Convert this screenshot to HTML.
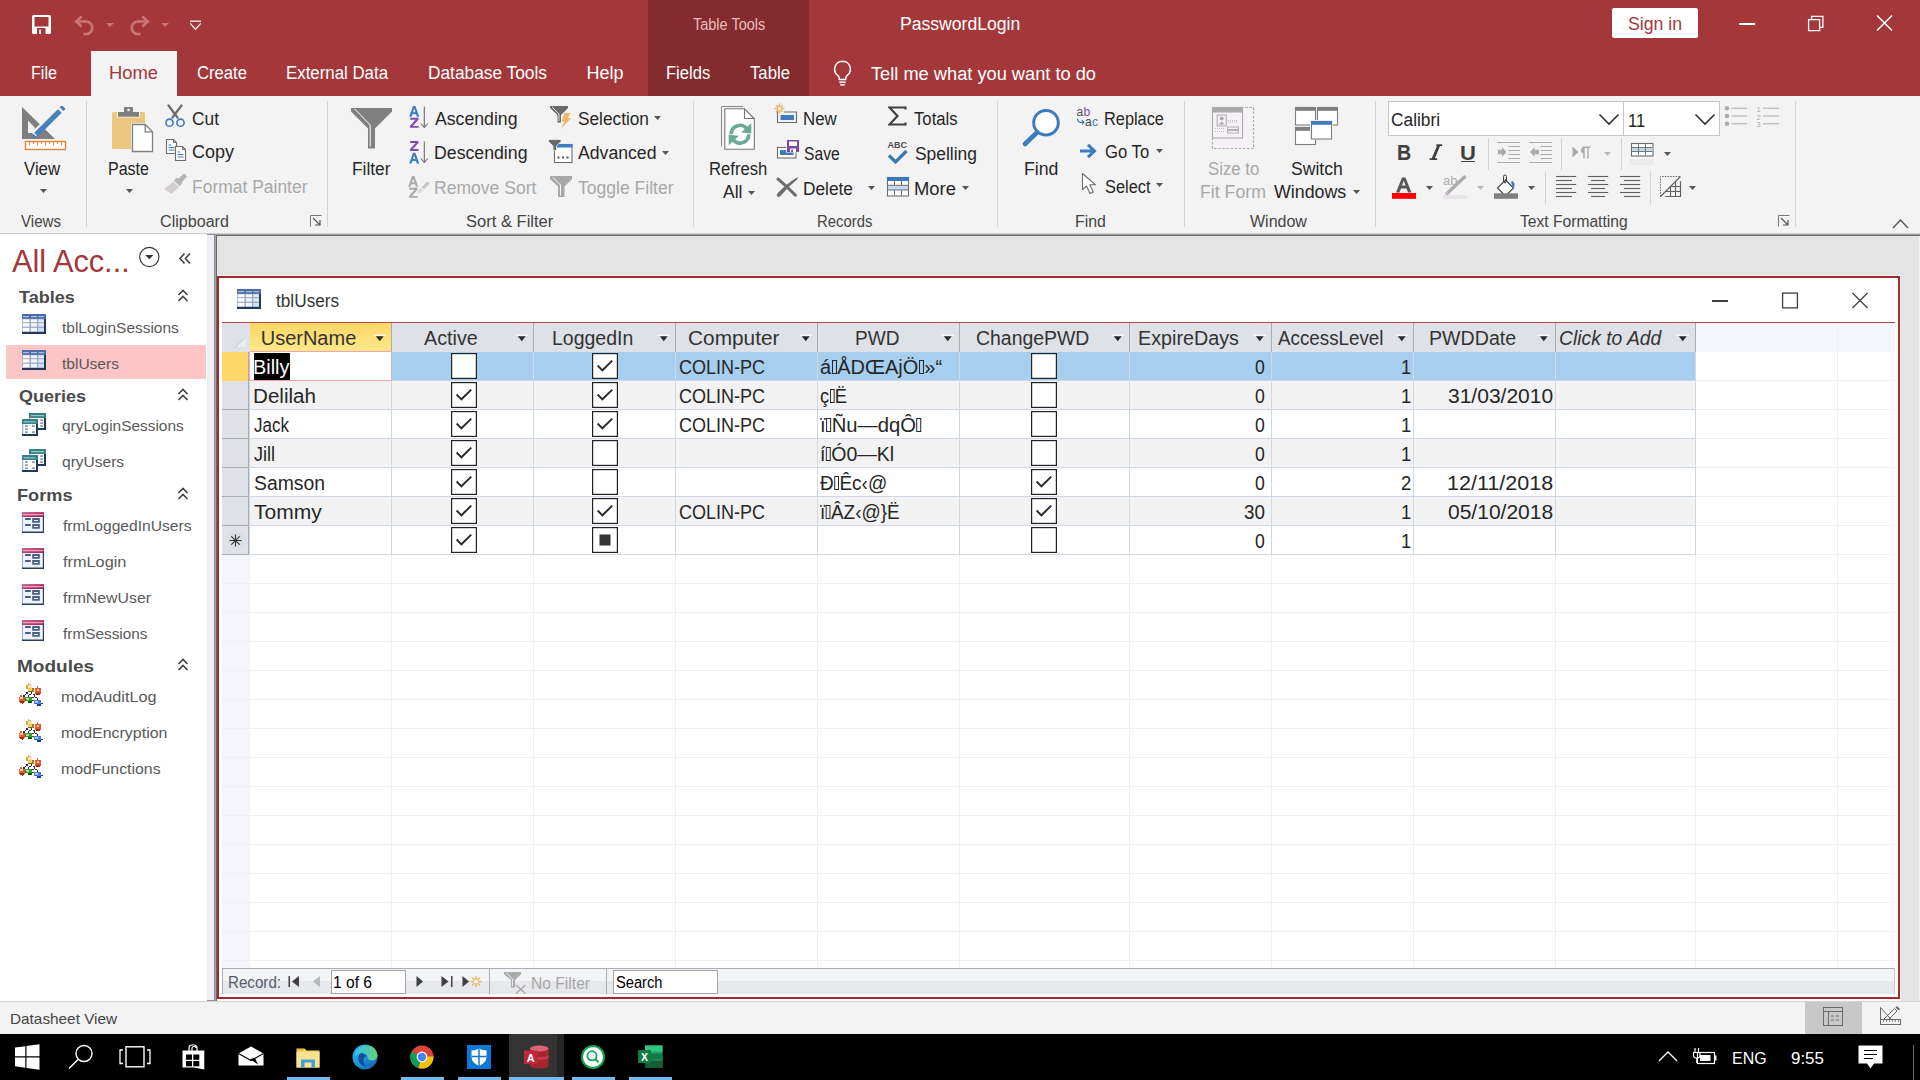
<!DOCTYPE html>
<html><head><meta charset="utf-8"><title>Access</title><style>
*{margin:0;padding:0;box-sizing:border-box}
html,body{width:1920px;height:1080px;overflow:hidden;background:#F3F3F3;font-family:"Liberation Sans",sans-serif;position:relative}
.a{position:absolute}
.t{position:absolute;white-space:nowrap;line-height:1;transform-origin:0 0}
.tofu{display:inline-block;width:5px;height:14.5px;border:1.2px solid currentColor;vertical-align:0;margin:0 0.5px}
</style></head><body>
<div class="a" style="left:0px;top:0px;width:1920px;height:96px;background:#A4373A;"></div>
<div class="a" style="left:648px;top:0px;width:161px;height:96px;background:#832B2E;"></div>
<div class="a" style="left:91px;top:51px;width:86px;height:45px;background:#F3F3F3;"></div>
<svg class="a" style="left:32px;top:15px" width="20" height="20" viewBox="0 0 20 20"><rect x="0" y="0" width="19" height="19" rx="1.5" fill="#fff"/><rect x="2.5" y="2" width="14" height="9.5" fill="#A4373A"/><rect x="5" y="13" width="8.5" height="6" fill="#A4373A"/><rect x="7.2" y="14.6" width="1.8" height="4.4" fill="#fff"/></svg>
<svg class="a" style="left:73px;top:15px" width="23" height="21" viewBox="0 0 23 21"><path d="M3.5 6.5H13a6.3 6.3 0 0 1 0 12.6h-2.5" fill="none" stroke="#C97678" stroke-width="2.6"/><path d="M8.6 1.4L3.3 6.5l5.3 5.1" fill="none" stroke="#C97678" stroke-width="2.6"/></svg>
<svg class="a" style="left:106px;top:23px" width="8" height="4" viewBox="0 0 8 4"><path d="M0 0H8L4 4Z" fill="#C97678"/></svg>
<svg class="a" style="left:128px;top:15px" width="23" height="21" viewBox="0 0 23 21"><path d="M19.5 6.5H10a6.3 6.3 0 0 0 0 12.6h2.5" fill="none" stroke="#C97678" stroke-width="2.6"/><path d="M14.4 1.4L19.7 6.5l-5.3 5.1" fill="none" stroke="#C97678" stroke-width="2.6"/></svg>
<svg class="a" style="left:161px;top:23px" width="8" height="4" viewBox="0 0 8 4"><path d="M0 0H8L4 4Z" fill="#C97678"/></svg>
<svg class="a" style="left:189px;top:20px" width="13" height="11" viewBox="0 0 13 11"><path d="M1 1.2H12" stroke="#fff" stroke-width="1.2"/><path d="M1.3 3.3L6.5 9.3L11.7 3.3" fill="none" stroke="#fff" stroke-width="1.2"/></svg>
<div class="t" style="left:692.50px;top:16.65px;font-size:16px;color:#EDBDBE;transform:scaleX(0.9057);">Table Tools</div>
<div class="t" style="left:899.77px;top:15.46px;font-size:18px;color:#FFFFFF;transform:scaleX(0.9768);">PasswordLogin</div>
<div class="a" style="left:1612px;top:8px;width:86px;height:30px;background:#FFFFFF;border-radius:2px"></div>
<div class="t" style="left:1628.00px;top:15.46px;font-size:18px;color:#A4373A;transform:scaleX(0.9810);">Sign in</div>
<div class="a" style="left:1739px;top:23px;width:16px;height:2px;background:#FFFFFF;"></div>
<svg class="a" style="left:1807px;top:14px" width="19" height="18" viewBox="0 0 19 18"><path d="M1.6 5.6H12.6V16.6H1.6Z" fill="none" stroke="#fff" stroke-width="1.3"/><path d="M4.6 5.6V2.3H15.9V13.4H12.6" fill="none" stroke="#fff" stroke-width="1.3"/></svg>
<svg class="a" style="left:1876px;top:15px" width="17" height="16" viewBox="0 0 17 16"><path d="M1 0.5L16 15.5M16 0.5L1 15.5" stroke="#fff" stroke-width="1.5"/></svg>
<div class="t" style="left:31.11px;top:64.21px;font-size:18px;color:#FFFFFF;transform:scaleX(0.8931);">File</div>
<div class="t" style="left:108.98px;top:64.21px;font-size:18px;color:#A4373A;transform:scaleX(1.0212);">Home</div>
<div class="t" style="left:197.00px;top:64.21px;font-size:18px;color:#FFFFFF;transform:scaleX(0.9257);">Create</div>
<div class="t" style="left:285.81px;top:64.21px;font-size:18px;color:#FFFFFF;transform:scaleX(0.9354);">External Data</div>
<div class="t" style="left:427.79px;top:64.21px;font-size:18px;color:#FFFFFF;transform:scaleX(0.9608);">Database Tools</div>
<div class="t" style="left:586.50px;top:64.21px;font-size:18px;color:#FFFFFF;">Help</div>
<div class="t" style="left:665.83px;top:64.21px;font-size:18px;color:#FFFFFF;transform:scaleX(0.9199);">Fields</div>
<div class="t" style="left:750.00px;top:64.21px;font-size:18px;color:#FFFFFF;transform:scaleX(0.9298);">Table</div>
<svg class="a" style="left:832px;top:60px" width="21" height="26" viewBox="0 0 21 26"><path d="M10.5 1.3a7.9 7.9 0 0 0-4.6 14.3c0.9 0.8 1.4 1.8 1.4 2.9v0.9h6.4v-0.9c0-1.1 0.5-2.1 1.4-2.9a7.9 7.9 0 0 0-4.6-14.3z" fill="none" stroke="#fff" stroke-width="1.5"/><path d="M7.3 22.2H13.7M8.2 24.8H12.8" stroke="#fff" stroke-width="1.5"/></svg>
<div class="t" style="left:871.00px;top:64.96px;font-size:18px;color:#FFFFFF;transform:scaleX(1.0130);">Tell me what you want to do</div>
<div class="a" style="left:0px;top:96px;width:1920px;height:138px;background:#F3F3F3;"></div>
<div class="a" style="left:0px;top:233px;width:1920px;height:1px;background:#CFCFCF;"></div>
<div class="a" style="left:86px;top:101px;width:1px;height:126px;background:#D2D2D2;"></div>
<div class="a" style="left:327px;top:101px;width:1px;height:126px;background:#D2D2D2;"></div>
<div class="a" style="left:693px;top:101px;width:1px;height:126px;background:#D2D2D2;"></div>
<div class="a" style="left:997px;top:101px;width:1px;height:126px;background:#D2D2D2;"></div>
<div class="a" style="left:1184px;top:101px;width:1px;height:126px;background:#D2D2D2;"></div>
<div class="a" style="left:1375px;top:101px;width:1px;height:126px;background:#D2D2D2;"></div>
<div class="a" style="left:1795px;top:101px;width:1px;height:126px;background:#D2D2D2;"></div>
<div class="t" style="left:21.00px;top:214.05px;font-size:16px;color:#444444;transform:scaleX(0.9436);">Views</div>
<div class="t" style="left:160.00px;top:214.05px;font-size:16px;color:#444444;transform:scaleX(1.0061);">Clipboard</div>
<div class="t" style="left:466.17px;top:214.05px;font-size:16px;color:#444444;transform:scaleX(1.0336);">Sort &amp; Filter</div>
<div class="t" style="left:816.87px;top:214.05px;font-size:16px;color:#444444;transform:scaleX(0.9287);">Records</div>
<div class="t" style="left:1074.51px;top:214.05px;font-size:16px;color:#444444;transform:scaleX(0.9922);">Find</div>
<div class="t" style="left:1250.00px;top:214.05px;font-size:16px;color:#444444;">Window</div>
<div class="t" style="left:1519.50px;top:214.05px;font-size:16px;color:#444444;transform:scaleX(0.9761);">Text Formatting</div>
<svg class="a" style="left:310px;top:215px" width="12" height="12" viewBox="0 0 12 12"><path d="M0.5 11.5V0.5H11.5" fill="none" stroke="#777" stroke-width="1"/><path d="M3 3L10 10M10 5V10H5" fill="none" stroke="#555" stroke-width="1.2"/></svg>
<svg class="a" style="left:1778px;top:215px" width="12" height="12" viewBox="0 0 12 12"><path d="M0.5 11.5V0.5H11.5" fill="none" stroke="#777" stroke-width="1"/><path d="M3 3L10 10M10 5V10H5" fill="none" stroke="#555" stroke-width="1.2"/></svg>
<svg class="a" style="left:1892px;top:218px" width="17" height="11" viewBox="0 0 17 11"><path d="M1 10L8.5 2L16 10" fill="none" stroke="#555" stroke-width="1.4"/></svg>
<svg class="a" style="left:21px;top:106px" width="46" height="45" viewBox="0 0 46 45">
      <path d="M1 1L34 33H1Z" fill="#7F7F7F"/>
      <path d="M7 14.5V27H19Z" fill="#F3F3F3"/>
      <path d="M10.5 26.5L14.5 30.5L28.5 16.5L24.5 12.5Z" fill="#F3F3F3"/>
      <path d="M13.2 26.8L37.3 2.7L41 6.4L16.9 30.5Z" fill="#4A81BD"/>
      <path d="M12.2 27.8L15.9 31.5L11.5 33Z" fill="#4A81BD"/>
      <path d="M38.6 1.3L40.8 -0.9L44.6 2.9L42.4 5.1Z" fill="#4A81BD"/>
      <path d="M36.9 3.0L38.4 1.5L42.3 5.4L40.8 6.9Z" fill="#F3F3F3"/>
      <rect x="4.5" y="35.5" width="40" height="8" fill="#fff" stroke="#E4853A" stroke-width="1.4"/>
      <path d="M8.5 36v3.5M12.5 36v2M16.5 36v3.5M20.5 36v2M24.5 36v3.5M28.5 36v2M32.5 36v3.5M36.5 36v2M40.5 36v3.5" stroke="#E4853A" stroke-width="1.1"/>
    </svg>
<div class="t" style="left:24.00px;top:159.71px;font-size:18px;color:#262626;transform:scaleX(0.9322);">View</div>
<svg class="a" style="left:40px;top:189px" width="7" height="4" viewBox="0 0 7 4"><path d="M0 0H7L3.5 4Z" fill="#555"/></svg>
<svg class="a" style="left:111px;top:106px" width="43" height="47" viewBox="0 0 43 47">
      <rect x="1" y="6" width="33" height="37" rx="1.5" fill="#EBC77E"/>
      <rect x="6" y="4.5" width="23" height="7" fill="#F3F3F3"/>
      <path d="M13 1.5Q13 1 13.8 1H21.2Q22 1 22 1.5V6H28V10.8H7V6H13Z" fill="#7F7F7F"/>
      <circle cx="17.5" cy="4" r="1.3" fill="#F3F3F3"/>
      <path d="M20 17H34.5L43 25.5V47H20Z" fill="#F3F3F3"/>
      <path d="M21.5 18.5H34.2L41.5 25.8V45.5H21.5Z" fill="#fff" stroke="#7F7F7F" stroke-width="1.3"/>
      <path d="M34.2 18.5V25.8H41.5" fill="none" stroke="#7F7F7F" stroke-width="1.3"/>
    </svg>
<div class="t" style="left:108.11px;top:159.71px;font-size:18px;color:#262626;transform:scaleX(0.8885);">Paste</div>
<svg class="a" style="left:126px;top:189px" width="7" height="4" viewBox="0 0 7 4"><path d="M0 0H7L3.5 4Z" fill="#555"/></svg>
<svg class="a" style="left:164px;top:104px" width="23" height="25" viewBox="0 0 23 25">
      <path d="M4.5 1.5L13.5 13.5M17.5 1.5L8.5 13.5" stroke="#6D6D6D" stroke-width="2.2" stroke-linecap="round"/>
      <circle cx="5.5" cy="18.7" r="3.6" fill="none" stroke="#3E7CBF" stroke-width="1.6"/>
      <circle cx="16.5" cy="18.7" r="3.6" fill="none" stroke="#3E7CBF" stroke-width="1.6"/>
    </svg>
<div class="t" style="left:192.00px;top:109.71px;font-size:18px;color:#262626;transform:scaleX(0.9639);">Cut</div>
<svg class="a" style="left:165px;top:138px" width="23" height="24" viewBox="0 0 23 24">
      <path d="M1.5 1.5H8.5L11.5 4.5V15.5H1.5Z" fill="#fff" stroke="#6D6D6D" stroke-width="1.1"/>
      <path d="M8.5 1.5V4.5H11.5" fill="none" stroke="#6D6D6D" stroke-width="1"/>
      <path d="M3.5 7H6M3.5 9.5H9.5M3.5 12H9.5" stroke="#3E7CBF" stroke-width="1"/>
      <path d="M10.5 8.5H17.5L20.5 11.5V22.5H10.5Z" fill="#fff" stroke="#6D6D6D" stroke-width="1.1"/>
      <path d="M17.5 8.5V11.5H20.5" fill="none" stroke="#6D6D6D" stroke-width="1"/>
      <path d="M12.5 14H15M12.5 16.5H18.5M12.5 19H18.5" stroke="#3E7CBF" stroke-width="1"/>
    </svg>
<div class="t" style="left:192.00px;top:143.46px;font-size:18px;color:#262626;">Copy</div>
<svg class="a" style="left:163px;top:173px" width="25" height="22" viewBox="0 0 25 22">
      <path d="M14.5 6.5L21 0.5L24 3.5L18 10Z" fill="#B5B2B5"/>
      <path d="M11 7.5L14 4.5L19.5 10L16.5 13Z" fill="#B5B2B5"/>
      <path d="M1 16L10.5 8.5L16 14L8.5 21Z" fill="#D2CED2"/>
    </svg>
<div class="t" style="left:191.53px;top:177.96px;font-size:18px;color:#A8A8A8;transform:scaleX(0.9700);">Format Painter</div>
<svg class="a" style="left:350px;top:107px" width="43" height="43" viewBox="0 0 43 43">
      <path d="M1 1H42V4.5L25 21.5V41.5H18V21.5L1 4.5Z" fill="#808080"/>
      <path d="M4.5 1.8L20.2 18V39.5" fill="none" stroke="#fff" stroke-width="1"/>
    </svg>
<div class="t" style="left:351.54px;top:159.71px;font-size:18px;color:#262626;transform:scaleX(0.9614);">Filter</div>
<svg class="a" style="left:409px;top:106px" width="11" height="23" viewBox="0 0 11 23"><path transform="translate(0 0)" d="M0.2 10.7L4 0H6.4L10.2 10.7H7.8L7 8.2H3.4L2.6 10.7ZM4 6.3H6.4L5.2 2.6Z" fill="#3C7BC0"/><path transform="translate(0 11.8)" d="M1.2 0H9.4V1.9L3.9 8.1H9.5V10H0.9V8.2L6.5 1.9H1.2Z" fill="#7F4BB0"/></svg>
<svg class="a" style="left:420px;top:106px" width="9" height="23" viewBox="0 0 9 23"><path d="M4.3 0.5V21.5M0.8 17.5L4.3 21.5L7.8 17.5" fill="none" stroke="#6D6D6D" stroke-width="1.1"/></svg>
<div class="t" style="left:434.50px;top:110.46px;font-size:18px;color:#262626;transform:scaleX(0.9814);">Ascending</div>
<svg class="a" style="left:409px;top:141px" width="11" height="23" viewBox="0 0 11 23"><path transform="translate(0 0)" d="M1.2 0H9.4V1.9L3.9 8.1H9.5V10H0.9V8.2L6.5 1.9H1.2Z" fill="#7F4BB0"/><path transform="translate(0 11.8)" d="M0.2 10.7L4 0H6.4L10.2 10.7H7.8L7 8.2H3.4L2.6 10.7ZM4 6.3H6.4L5.2 2.6Z" fill="#3C7BC0"/></svg>
<svg class="a" style="left:420px;top:141px" width="9" height="23" viewBox="0 0 9 23"><path d="M4.3 0.5V21.5M0.8 17.5L4.3 21.5L7.8 17.5" fill="none" stroke="#6D6D6D" stroke-width="1.1"/></svg>
<div class="t" style="left:433.52px;top:144.46px;font-size:18px;color:#262626;transform:scaleX(0.9833);">Descending</div>
<svg class="a" style="left:408px;top:176px" width="11" height="23" viewBox="0 0 11 23"><path transform="translate(0 0)" d="M0.2 10.7L4 0H6.4L10.2 10.7H7.8L7 8.2H3.4L2.6 10.7ZM4 6.3H6.4L5.2 2.6Z" fill="#ABABAB"/><path transform="translate(0 11.8)" d="M1.2 0H9.4V1.9L3.9 8.1H9.5V10H0.9V8.2L6.5 1.9H1.2Z" fill="#ABABAB"/></svg>
<svg class="a" style="left:415px;top:180px" width="15" height="15" viewBox="0 0 15 15"><path d="M6.5 7.2L11.8 1.9Q12.6 1.1 13.4 1.9L14.1 2.6Q14.9 3.4 14.1 4.2L8.8 9.5Z" fill="#C9C5C9"/><path d="M5.6 8.1L7.9 10.4L4.8 13.2Q3.9 13.9 3.2 13.2L2.6 12.6Q1.9 11.9 2.6 11.1Z" fill="#DCD8DC"/></svg>
<div class="t" style="left:433.52px;top:179.46px;font-size:18px;color:#A8A8A8;transform:scaleX(0.9756);">Remove Sort</div>
<svg class="a" style="left:549px;top:105px" width="22" height="25" viewBox="0 0 22 25">
      <path d="M1 1H19V3L12 10V17.5H8.5V10L1 3Z" fill="#6A6A6A"/>
      <path d="M3 2L10 9V16" fill="none" stroke="#fff" stroke-width="0.8"/>
      <path d="M15.5 8H21.5L18.6 13.2H22L11.8 24L15.6 16.4H12.5Z" fill="#EAB765"/>
    </svg>
<div class="t" style="left:577.50px;top:110.46px;font-size:18px;color:#262626;transform:scaleX(0.9584);">Selection</div>
<svg class="a" style="left:654px;top:116px" width="7" height="4" viewBox="0 0 7 4"><path d="M0 0H7L3.5 4Z" fill="#555"/></svg>
<svg class="a" style="left:548px;top:139px" width="25" height="25" viewBox="0 0 25 25">
      <rect x="6.5" y="5.5" width="17.5" height="18" fill="#fff" stroke="#6D6D6D" stroke-width="1.1"/>
      <rect x="6" y="5" width="18.5" height="3.5" fill="#3E7CBF"/>
      <path d="M0.5 0.5H13V2.5L8.5 7V11.5H5V7L0.5 2.5Z" fill="#6A6A6A" stroke="#F3F3F3" stroke-width="0.8"/>
      <rect x="9.5" y="17.5" width="2" height="2" fill="#555"/><rect x="14" y="17.5" width="2" height="2" fill="#555"/><rect x="18.5" y="17.5" width="2" height="2" fill="#555"/>
    </svg>
<div class="t" style="left:577.50px;top:144.46px;font-size:18px;color:#262626;transform:scaleX(0.9804);">Advanced</div>
<svg class="a" style="left:662px;top:151px" width="7" height="4" viewBox="0 0 7 4"><path d="M0 0H7L3.5 4Z" fill="#555"/></svg>
<svg class="a" style="left:549px;top:175px" width="24" height="23" viewBox="0 0 24 23">
      <path d="M1 1H23V4L15.5 11.5V22H9V11.5L1 4Z" fill="#A8A8A8"/>
      <path d="M4 2.5L11.5 10V20.5" fill="none" stroke="#fff" stroke-width="0.9"/>
    </svg>
<div class="t" style="left:577.50px;top:179.46px;font-size:18px;color:#A8A8A8;transform:scaleX(0.9740);">Toggle Filter</div>
<svg class="a" style="left:720px;top:105px" width="36" height="46" viewBox="0 0 36 46">
      <path d="M1.5 41.5V1.5H23" fill="none" stroke="#888" stroke-width="1"/>
      <path d="M4.8 44.3V3.8H24.5L34.3 13.5V44.3Z" fill="#fff" stroke="#777" stroke-width="1.1"/>
      <path d="M24.5 3.8V13.5H34.3" fill="none" stroke="#777" stroke-width="1.1"/>
      <path d="M11.20 29.20A8.8 8.8 0 0 1 26.54 23.31" fill="none" stroke="#6AA897" stroke-width="3.6"/><path d="M21 27.6L31.3 18.2V28.6Z" fill="#6AA897"/><path d="M28.80 29.20A8.8 8.8 0 0 1 13.46 35.09" fill="none" stroke="#6AA897" stroke-width="3.6"/><path d="M19 30.8L8.7 40.2V29.8Z" fill="#6AA897"/>
    </svg>
<div class="t" style="left:708.57px;top:159.71px;font-size:18px;color:#262626;transform:scaleX(0.9260);">Refresh</div>
<div class="t" style="left:722.50px;top:182.96px;font-size:18px;color:#262626;transform:scaleX(0.9734);">All</div>
<svg class="a" style="left:748px;top:191px" width="7" height="4" viewBox="0 0 7 4"><path d="M0 0H7L3.5 4Z" fill="#555"/></svg>
<svg class="a" style="left:774px;top:103px" width="25" height="21" viewBox="0 0 25 21">
      <path d="M5.5 0.5V10.5M0.5 5.5H10.5M2 2L9 9M9 2L2 9" stroke="#EAB765" stroke-width="1.3"/>
      <circle cx="5.5" cy="5.5" r="2.9" fill="#EAB765"/><circle cx="5.5" cy="5.5" r="1.7" fill="#FFF6E0"/>
      <path d="M3.5 8.5V19.5H22.5V9H10" fill="none" stroke="#6D6D6D" stroke-width="1.1"/>
      <rect x="6.5" y="12" width="13.5" height="5" fill="#3E7CBF"/>
    </svg>
<div class="t" style="left:802.81px;top:110.46px;font-size:18px;color:#262626;transform:scaleX(0.9372);">New</div>
<svg class="a" style="left:776px;top:139px" width="25" height="21" viewBox="0 0 25 21">
      <rect x="1.5" y="8.5" width="18.5" height="10.5" fill="#fff" stroke="#6D6D6D" stroke-width="1.1"/>
      <rect x="4" y="11" width="13.5" height="5" fill="#3E7CBF"/>
      <rect x="10" y="0" width="14" height="13.5" fill="#F3F3F3"/>
      <rect x="11" y="1" width="12" height="12" fill="#7E45A8"/>
      <rect x="13" y="2.5" width="8" height="4.5" fill="#fff"/>
      <rect x="14" y="9.5" width="6" height="3.5" fill="#fff"/><rect x="15.2" y="10.5" width="1.8" height="2.5" fill="#7E45A8"/>
    </svg>
<div class="t" style="left:804.00px;top:145.06px;font-size:18px;color:#262626;transform:scaleX(0.8704);">Save</div>
<svg class="a" style="left:775px;top:176px" width="24" height="22" viewBox="0 0 24 22">
      <path d="M1.6 2.6Q2.6 0.9 4.2 1.9Q12 8.5 21.6 18.2Q22.6 19.6 21.4 20.6Q20.2 21.2 19 20Q10 10.5 2.2 4.4Q1.2 3.6 1.6 2.6Z" fill="#6D6D6D"/>
      <path d="M22.6 2.2Q23.2 1.2 22 1.4Q12 7.2 2.4 17.4Q1 19.2 2.4 20.6Q4 21.6 5.4 20Q13.5 10.5 22 3.4Q22.6 2.8 22.6 2.2Z" fill="#6D6D6D"/>
    </svg>
<div class="t" style="left:803.04px;top:179.96px;font-size:18px;color:#262626;transform:scaleX(0.9604);">Delete</div>
<svg class="a" style="left:868px;top:186px" width="7" height="4" viewBox="0 0 7 4"><path d="M0 0H7L3.5 4Z" fill="#555"/></svg>
<svg class="a" style="left:888px;top:106px" width="19" height="20" viewBox="0 0 19 20"><path d="M17.5 3.5V1.5H1.5L9.5 10L1.5 18.5H17.5V16.5" fill="none" stroke="#404040" stroke-width="2.2"/></svg>
<div class="t" style="left:914.30px;top:110.46px;font-size:18px;color:#262626;transform:scaleX(0.9272);">Totals</div>
<svg class="a" style="left:886px;top:140px" width="22" height="25" viewBox="0 0 22 25">
      <text x="1.4" y="8.2" font-family="Liberation Sans" font-weight="bold" font-size="9.6" fill="#505050" textLength="19.5" lengthAdjust="spacingAndGlyphs">ABC</text>
      <path d="M3 15.5L9.5 22L20.5 11" fill="none" stroke="#3C78B8" stroke-width="3.2"/>
    </svg>
<div class="t" style="left:914.90px;top:145.06px;font-size:18px;color:#262626;transform:scaleX(0.9677);">Spelling</div>
<svg class="a" style="left:886px;top:176px" width="24" height="21" viewBox="0 0 24 21">
      <rect x="1.5" y="1.5" width="21" height="18.5" fill="#fff" stroke="#6D6D6D" stroke-width="1.1"/>
      <rect x="1" y="1" width="22" height="4" fill="#3C78B8"/>
      <rect x="2" y="9.3" width="20" height="4.6" fill="#C5D9EC"/>
      <path d="M2 9.3H22M2 14H22M8.5 5V9.3M15.5 5V9.3M8.5 14V19.5M15.5 14V19.5" stroke="#6D6D6D" stroke-width="1"/>
    </svg>
<div class="t" style="left:914.28px;top:179.96px;font-size:18px;color:#262626;transform:scaleX(1.0225);">More</div>
<svg class="a" style="left:962px;top:186px" width="7" height="4" viewBox="0 0 7 4"><path d="M0 0H7L3.5 4Z" fill="#555"/></svg>
<svg class="a" style="left:1020px;top:107px" width="42" height="42" viewBox="0 0 42 42">
      <circle cx="26" cy="15.7" r="12.3" fill="#fff" stroke="#3C7BC0" stroke-width="3"/>
      <path d="M5 37L16.5 26" stroke="#3C7BC0" stroke-width="4.6" stroke-linecap="round"/>
    </svg>
<div class="t" style="left:1023.52px;top:159.71px;font-size:18px;color:#262626;transform:scaleX(0.9847);">Find</div>
<svg class="a" style="left:1075px;top:104px" width="26" height="24" viewBox="0 0 26 24">
      <text x="1.5" y="11.5" font-family="Liberation Sans" font-size="12" fill="#505050">a</text>
      <text x="8.5" y="11.5" font-family="Liberation Sans" font-size="12" fill="#7F4BB0">b</text>
      <text x="10" y="21.7" font-family="Liberation Sans" font-size="12" fill="#404040">a</text>
      <text x="17" y="21.7" font-family="Liberation Sans" font-size="12" fill="#3C7BC0">c</text>
      <path d="M2.5 14.5Q2.5 18 5.5 18.3H9M6.8 16.2L9 18.3L6.8 20.4" fill="none" stroke="#3C7BC0" stroke-width="1.2"/>
    </svg>
<div class="t" style="left:1104.09px;top:110.46px;font-size:18px;color:#262626;transform:scaleX(0.9073);">Replace</div>
<svg class="a" style="left:1079px;top:143px" width="19" height="16" viewBox="0 0 19 16"><path d="M1 8H15M9 1.8L15.5 8L9 14.2" fill="none" stroke="#3C7BC0" stroke-width="3"/></svg>
<div class="t" style="left:1104.50px;top:143.46px;font-size:18px;color:#262626;transform:scaleX(0.9268);">Go To</div>
<svg class="a" style="left:1156px;top:149px" width="7" height="4" viewBox="0 0 7 4"><path d="M0 0H7L3.5 4Z" fill="#555"/></svg>
<svg class="a" style="left:1081px;top:172px" width="17" height="24" viewBox="0 0 17 24"><path d="M1.5 1.5V17.5L5.5 14L9 21.5L12.2 20L8.8 12.8H14.5Z" fill="#fff" stroke="#6D6D6D" stroke-width="1.1" stroke-linejoin="round"/></svg>
<div class="t" style="left:1104.50px;top:178.46px;font-size:18px;color:#262626;transform:scaleX(0.9095);">Select</div>
<svg class="a" style="left:1156px;top:183px" width="7" height="4" viewBox="0 0 7 4"><path d="M0 0H7L3.5 4Z" fill="#555"/></svg>
<svg class="a" style="left:1211px;top:106px" width="44" height="44" viewBox="0 0 44 44">
      <rect x="1.5" y="1.5" width="41" height="41" fill="#F5F1F7" stroke="#A8A8A8" stroke-width="1.1" stroke-dasharray="2.5 1.6"/>
      <rect x="1.5" y="1.5" width="30" height="30.5" fill="#F5F1F7" stroke="#AAAAAA" stroke-width="1.1"/>
      <rect x="1" y="1" width="31" height="5.5" fill="#AAAAAA"/>
      <rect x="6.2" y="9" width="9" height="11" fill="none" stroke="#AAAAAA" stroke-width="1"/>
      <circle cx="10.7" cy="12.5" r="1.9" fill="#AAAAAA"/><path d="M7.7 18.5Q10.7 13.5 13.7 18.5Z" fill="#AAAAAA"/>
      <path d="M17 14.5h10M17 16h10" stroke="#BBBBBB" stroke-width="0.9" stroke-dasharray="1 1"/>
      <path d="M4 22.5h10M4 25.5h10" stroke="#BBBBBB" stroke-width="0.9" stroke-dasharray="1 1"/>
      <rect x="16.5" y="21" width="11" height="2.5" fill="none" stroke="#AAAAAA" stroke-width="0.9"/>
      <rect x="16.5" y="24.5" width="11" height="2.5" fill="none" stroke="#AAAAAA" stroke-width="0.9"/>
    </svg>
<div class="t" style="left:1207.50px;top:159.71px;font-size:18px;color:#A8A8A8;transform:scaleX(0.9315);">Size to</div>
<div class="t" style="left:1199.52px;top:182.96px;font-size:18px;color:#A8A8A8;transform:scaleX(0.9847);">Fit Form</div>
<svg class="a" style="left:1294px;top:106px" width="46" height="40" viewBox="0 0 46 40">
      <rect x="1.5" y="1.5" width="20" height="17.5" fill="#fff" stroke="#7F7F7F" stroke-width="1.1"/><rect x="1" y="1" width="21" height="3.8" fill="#7F7F7F"/>
      <rect x="23.5" y="1.5" width="20" height="17.5" fill="#fff" stroke="#7F7F7F" stroke-width="1.1"/><rect x="23" y="1" width="21" height="3.8" fill="#7F7F7F"/>
      <rect x="1.5" y="21.5" width="20" height="17" fill="#fff" stroke="#7F7F7F" stroke-width="1.1"/><rect x="1" y="21" width="21" height="3.8" fill="#7F7F7F"/>
      <rect x="16" y="14" width="23" height="20" fill="#F3F3F3"/>
      <rect x="17.5" y="15.5" width="20" height="17.5" fill="#fff" stroke="#7F7F7F" stroke-width="1.1"/><rect x="17" y="15" width="21" height="3.8" fill="#3F7BBF"/>
    </svg>
<div class="t" style="left:1291.00px;top:159.71px;font-size:18px;color:#262626;transform:scaleX(0.9759);">Switch</div>
<div class="t" style="left:1273.75px;top:182.96px;font-size:18px;color:#262626;transform:scaleX(0.9895);">Windows</div>
<svg class="a" style="left:1353px;top:190px" width="7" height="4" viewBox="0 0 7 4"><path d="M0 0H7L3.5 4Z" fill="#555"/></svg>
<div class="a" style="left:1388px;top:101px;width:236px;height:35px;background:#FFFFFF;border:1px solid #C6C6C6"></div>
<div class="a" style="left:1623px;top:101px;width:97px;height:35px;background:#FFFFFF;border:1px solid #C6C6C6"></div>
<div class="t" style="left:1391.40px;top:111.46px;font-size:18px;color:#262626;transform:scaleX(0.9618);">Calibri</div>
<div class="t" style="left:1627.83px;top:111.71px;font-size:18px;color:#262626;transform:scaleX(0.9194);">11</div>
<svg class="a" style="left:1598px;top:113px" width="22" height="13" viewBox="0 0 22 13"><path d="M1.5 1.5L11 11L20.5 1.5" fill="none" stroke="#333" stroke-width="1.6"/></svg>
<svg class="a" style="left:1694px;top:113px" width="22" height="13" viewBox="0 0 22 13"><path d="M1.5 1.5L11 11L20.5 1.5" fill="none" stroke="#333" stroke-width="1.6"/></svg>
<svg class="a" style="left:1724px;top:105px" width="25" height="22" viewBox="0 0 25 22">
      <circle cx="3" cy="3.2" r="2.2" fill="#ABABAB"/><circle cx="3" cy="11" r="2.2" fill="#ABABAB"/><circle cx="3" cy="18.8" r="2.2" fill="#ABABAB"/>
      <path d="M7.5 3.2H23M7.5 11H23M7.5 18.8H23" stroke="#ABABAB" stroke-width="1"/>
    </svg>
<svg class="a" style="left:1756px;top:105px" width="24" height="22" viewBox="0 0 24 22">
      <text x="0.5" y="7" font-family="Liberation Sans" font-size="7.5" fill="#ABABAB">1</text>
      <text x="0.5" y="14.8" font-family="Liberation Sans" font-size="7.5" fill="#ABABAB">2</text>
      <text x="0.5" y="22.3" font-family="Liberation Sans" font-size="7.5" fill="#ABABAB">3</text>
      <path d="M7 3.2H23M7 11H23M7 18.8H23" stroke="#ABABAB" stroke-width="1"/>
    </svg>
<div class="t" style="left:1397.01px;top:142.07px;font-size:22px;color:#404040;font-weight:700;transform:scaleX(0.8929);">B</div>
<svg class="a" style="left:1428px;top:143px" width="15" height="18" viewBox="0 0 15 18"><path d="M8.6 1.2H14.2V2.9H12L6.9 15.3H9.2V17H1.6V15.3H3.8L8.9 2.9H8.2Z" fill="#404040"/></svg>
<div class="t" style="left:1459.65px;top:142.42px;font-size:21px;color:#404040;font-weight:700;transform:scaleX(1.0462);">U</div>
<div class="a" style="left:1460.5px;top:161px;width:14px;height:1.4px;background:#404040;"></div>
<div class="a" style="left:1488px;top:138px;width:1px;height:32px;background:#D2D2D2;"></div>
<div class="a" style="left:1561px;top:138px;width:1px;height:32px;background:#D2D2D2;"></div>
<div class="a" style="left:1621px;top:138px;width:1px;height:32px;background:#D2D2D2;"></div>
<svg class="a" style="left:1497px;top:141px" width="24" height="23" viewBox="0 0 24 23">
      <path d="M0.5 1.5H23M11.5 5.5H23M11.5 9.5H23M11.5 13.5H23M11.5 17.5H23M0.5 21.5H23" stroke="#ABABAB" stroke-width="1"/>
      <path d="M1 8.7H5V6.3L9.5 11L5 15.7V13.3H1Z" fill="#ABABAB"/>
    </svg>
<svg class="a" style="left:1529px;top:141px" width="24" height="23" viewBox="0 0 24 23">
      <path d="M0.5 1.5H23M11.5 5.5H23M11.5 9.5H23M11.5 13.5H23M11.5 17.5H23M0.5 21.5H23" stroke="#ABABAB" stroke-width="1"/>
      <path d="M10 8.7H5.5V6.3L1 11L5.5 15.7V13.3H10Z" fill="#ABABAB"/>
    </svg>
<svg class="a" style="left:1572px;top:146px" width="20" height="14" viewBox="0 0 20 14">
      <path d="M0.5 0.5L6.5 6L0.5 11.5Z" fill="#ABABAB"/>
      <path d="M12 12.5V1.2M16 12.5V1.2M10.5 1.2H18.5" stroke="#ABABAB" stroke-width="1.4"/>
      <path d="M12 1.2A3 3 0 0 0 12 7.5Z" fill="#ABABAB"/>
    </svg>
<svg class="a" style="left:1604px;top:152px" width="7" height="4" viewBox="0 0 7 4"><path d="M0 0H7L3.5 4Z" fill="#BBBBBB"/></svg>
<svg class="a" style="left:1630px;top:142px" width="25" height="24" viewBox="0 0 25 24">
      <rect x="1.5" y="1.5" width="21.5" height="12.5" fill="#fff" stroke="#6D6D6D" stroke-width="1.1"/>
      <rect x="2" y="5.5" width="20.5" height="4" fill="#C5D9EC"/>
      <path d="M2 5.5H22.5M2 9.5H22.5M8.5 2V13.5M15.5 2V13.5" stroke="#6D6D6D" stroke-width="0.9"/>
      <rect x="0" y="17" width="24" height="6" fill="#EBEBEB"/>
    </svg>
<svg class="a" style="left:1664px;top:152px" width="7" height="4" viewBox="0 0 7 4"><path d="M0 0H7L3.5 4Z" fill="#555"/></svg>
<svg class="a" style="left:1391px;top:176px" width="26" height="24" viewBox="0 0 26 24">
      <path d="M5 16.5L11 1.5H14.5L20.5 16.5H17L15.5 12.5H10L8.5 16.5ZM11 9.5H14.5L12.75 4.8Z" fill="#595959"/>
      <rect x="1" y="17" width="24" height="5.8" fill="#FF0000"/>
    </svg>
<svg class="a" style="left:1426px;top:186px" width="7" height="4" viewBox="0 0 7 4"><path d="M0 0H7L3.5 4Z" fill="#555"/></svg>
<svg class="a" style="left:1442px;top:174px" width="26" height="26" viewBox="0 0 26 26">
      <text x="1" y="11" font-family="Liberation Sans" font-size="13" fill="#AEAEAE">ab</text>
      <path d="M5 19.5L22.5 3" stroke="#ABABAB" stroke-width="3.4" stroke-linecap="round"/>
      <path d="M4.2 20L6.6 17.8" stroke="#F3F3F3" stroke-width="0.8"/>
      <rect x="1" y="21" width="24" height="4" fill="#E8E4EA"/>
    </svg>
<svg class="a" style="left:1477px;top:186px" width="7" height="4" viewBox="0 0 7 4"><path d="M0 0H7L3.5 4Z" fill="#BBBBBB"/></svg>
<svg class="a" style="left:1493px;top:174px" width="26" height="26" viewBox="0 0 26 26">
      <path d="M12.5 6L20.5 14L12.5 22L4.5 14Z" fill="#fff" stroke="#404040" stroke-width="1.1"/>
      <path d="M10.5 8V2.5Q10.5 1 12 1Q13.5 1 13.5 2.5V8" fill="none" stroke="#404040" stroke-width="1"/>
      <circle cx="12" cy="8.3" r="1.1" fill="#404040"/>
      <path d="M19 7Q22 8.5 21.5 11.5Q21 14 20 15.5Q19.5 11 18 8.5Z" fill="#3C7BC0"/>
      <rect x="1" y="19.3" width="24" height="5.5" fill="#808080"/>
    </svg>
<svg class="a" style="left:1528px;top:186px" width="7" height="4" viewBox="0 0 7 4"><path d="M0 0H7L3.5 4Z" fill="#555"/></svg>
<div class="a" style="left:1545px;top:172px;width:1px;height:32px;background:#D2D2D2;"></div>
<div class="a" style="left:1650px;top:172px;width:1px;height:32px;background:#D2D2D2;"></div>
<svg class="a" style="left:1555.8px;top:175px" width="21" height="23" viewBox="0 0 21 23"><path d="M0 1.5H20.2" stroke="#606060" stroke-width="1.1"/><path d="M0 5.5H16" stroke="#606060" stroke-width="1.1"/><path d="M0 9.5H20.2" stroke="#606060" stroke-width="1.1"/><path d="M0 13.5H16" stroke="#606060" stroke-width="1.1"/><path d="M0 17.5H20.2" stroke="#606060" stroke-width="1.1"/><path d="M0 21.5H16" stroke="#606060" stroke-width="1.1"/></svg>
<svg class="a" style="left:1587.9px;top:175px" width="21" height="23" viewBox="0 0 21 23"><path d="M0 1.5H20.2" stroke="#606060" stroke-width="1.1"/><path d="M3.1 5.5H17.1" stroke="#606060" stroke-width="1.1"/><path d="M0 9.5H20.2" stroke="#606060" stroke-width="1.1"/><path d="M3.1 13.5H17.1" stroke="#606060" stroke-width="1.1"/><path d="M0 17.5H20.2" stroke="#606060" stroke-width="1.1"/><path d="M3.1 21.5H17.1" stroke="#606060" stroke-width="1.1"/></svg>
<svg class="a" style="left:1620px;top:175px" width="21" height="23" viewBox="0 0 21 23"><path d="M0 1.5H20.2" stroke="#606060" stroke-width="1.1"/><path d="M4 5.5H20.2" stroke="#606060" stroke-width="1.1"/><path d="M0 9.5H20.2" stroke="#606060" stroke-width="1.1"/><path d="M4 13.5H20.2" stroke="#606060" stroke-width="1.1"/><path d="M0 17.5H20.2" stroke="#606060" stroke-width="1.1"/><path d="M4 21.5H20.2" stroke="#606060" stroke-width="1.1"/></svg>
<svg class="a" style="left:1659px;top:175px" width="23" height="23" viewBox="0 0 23 23">
      <path d="M1.5 21.5V1.5H21.5" fill="none" stroke="#606060" stroke-width="1" stroke-dasharray="1.5 1.2"/>
      <path d="M1.5 21.5L21.5 1.5" stroke="#606060" stroke-width="1.1"/>
      <path d="M6.5 21.5H21.5V6.5M6.5 16.5H21.5M11.5 11.5H21.5M16.5 6.5V21.5M11.5 11.5V21.5" fill="none" stroke="#606060" stroke-width="1.1"/>
      <path d="M21.5 6.5V21.5H6.5" fill="none" stroke="#606060" stroke-width="1.1"/>
    </svg>
<svg class="a" style="left:1689px;top:186px" width="7" height="4" viewBox="0 0 7 4"><path d="M0 0H7L3.5 4Z" fill="#555"/></svg>
<div class="a" style="left:0px;top:234px;width:207px;height:767px;background:#FFFFFF;"></div>
<div class="a" style="left:207px;top:234px;width:7px;height:767px;background:#EEEFF2;"></div>
<div class="a" style="left:207px;top:234px;width:8px;height:1px;background:#8A94A0;"></div>
<div class="a" style="left:207px;top:1000px;width:8px;height:1px;background:#8A94A0;"></div>
<div class="a" style="left:214px;top:234px;width:1px;height:767px;background:#8A94A0;"></div>
<div class="a" style="left:215px;top:234px;width:1px;height:767px;background:#A4A4A4;"></div>
<div class="t" style="left:12.00px;top:244.81px;font-size:32px;color:#A4373A;transform:scaleX(0.9591);">All Acc...</div>
<svg class="a" style="left:138px;top:246px" width="23" height="23" viewBox="0 0 23 23"><circle cx="11.3" cy="11" r="9.6" fill="none" stroke="#333" stroke-width="1.1"/><path d="M7.2 9H15.4L11.3 13.2Z" fill="#333"/></svg>
<svg class="a" style="left:178px;top:252px" width="14" height="13" viewBox="0 0 14 13"><path d="M6.5 1.5L2 6.5L6.5 11.5M12 1.5L7.5 6.5L12 11.5" fill="none" stroke="#404040" stroke-width="1.6"/></svg>
<div class="t" style="left:18.50px;top:288.71px;font-size:17px;color:#4A4A4A;font-weight:700;transform:scaleX(1.0625);">Tables</div>
<svg class="a" style="left:177px;top:288.9px" width="12" height="13" viewBox="0 0 12 13"><path d="M1.5 6L6 1.5L10.5 6M1.5 12L6 7.5L10.5 12" fill="none" stroke="#404040" stroke-width="1.6"/></svg>
<svg class="a" style="left:22px;top:314px" width="24" height="20" viewBox="0 0 24 20"><rect x="0" y="0" width="24" height="20" fill="#94A5C2"/>
      <rect x="0" y="0" width="24" height="4.8" fill="#4D6BA8"/>
      <rect x="1" y="2" width="6" height="1.2" fill="#AFC0E0"/><rect x="9" y="2" width="6" height="1.2" fill="#AFC0E0"/><rect x="16.5" y="2" width="5.5" height="1.2" fill="#AFC0E0"/>
      <rect x="0.8" y="5.3" width="6.7" height="2.9" fill="#FFFFFF"/><rect x="8.9" y="5.3" width="6.1" height="2.9" fill="#F2F6FD"/><rect x="16.2" y="5.3" width="5.8" height="2.9" fill="#E0EAFA"/>
      <rect x="0.8" y="9.2" width="6.7" height="3.4" fill="#FFFFFF"/><rect x="8.9" y="9.2" width="6.1" height="3.4" fill="#F0F5FD"/><rect x="16.2" y="9.2" width="5.8" height="3.4" fill="#DCE7FA"/>
      <rect x="0.8" y="13.8" width="6.7" height="3.6" fill="#FFFFFF"/><rect x="8.9" y="13.8" width="6.1" height="3.6" fill="#EEF4FD"/><rect x="16.2" y="13.8" width="5.8" height="3.6" fill="#D2E1FA"/>
      <rect x="22" y="4.8" width="2" height="15.2" fill="#23395A"/><rect x="0" y="18" width="24" height="2" fill="#23395A"/>
      <rect x="0" y="4.8" width="0.8" height="13.2" fill="#B5C2D8"/></svg>
<div class="t" style="left:62.10px;top:320.10px;font-size:15px;color:#595959;transform:scaleX(1.0292);">tblLoginSessions</div>
<div class="a" style="left:6px;top:345px;width:200px;height:34px;background:#FCC5C6;"></div>
<svg class="a" style="left:22px;top:350px" width="24" height="20" viewBox="0 0 24 20"><rect x="0" y="0" width="24" height="20" fill="#94A5C2"/>
      <rect x="0" y="0" width="24" height="4.8" fill="#4D6BA8"/>
      <rect x="1" y="2" width="6" height="1.2" fill="#AFC0E0"/><rect x="9" y="2" width="6" height="1.2" fill="#AFC0E0"/><rect x="16.5" y="2" width="5.5" height="1.2" fill="#AFC0E0"/>
      <rect x="0.8" y="5.3" width="6.7" height="2.9" fill="#FFFFFF"/><rect x="8.9" y="5.3" width="6.1" height="2.9" fill="#F2F6FD"/><rect x="16.2" y="5.3" width="5.8" height="2.9" fill="#E0EAFA"/>
      <rect x="0.8" y="9.2" width="6.7" height="3.4" fill="#FFFFFF"/><rect x="8.9" y="9.2" width="6.1" height="3.4" fill="#F0F5FD"/><rect x="16.2" y="9.2" width="5.8" height="3.4" fill="#DCE7FA"/>
      <rect x="0.8" y="13.8" width="6.7" height="3.6" fill="#FFFFFF"/><rect x="8.9" y="13.8" width="6.1" height="3.6" fill="#EEF4FD"/><rect x="16.2" y="13.8" width="5.8" height="3.6" fill="#D2E1FA"/>
      <rect x="22" y="4.8" width="2" height="15.2" fill="#23395A"/><rect x="0" y="18" width="24" height="2" fill="#23395A"/>
      <rect x="0" y="4.8" width="0.8" height="13.2" fill="#B5C2D8"/></svg>
<div class="t" style="left:62.30px;top:356.10px;font-size:15px;color:#595959;transform:scaleX(1.0346);">tblUsers</div>
<div class="t" style="left:18.50px;top:387.81px;font-size:17px;color:#4A4A4A;font-weight:700;transform:scaleX(1.0580);">Queries</div>
<svg class="a" style="left:177px;top:388px" width="12" height="13" viewBox="0 0 12 13"><path d="M1.5 6L6 1.5L10.5 6M1.5 12L6 7.5L10.5 12" fill="none" stroke="#404040" stroke-width="1.6"/></svg>
<svg class="a" style="left:22px;top:412px" width="25" height="25" viewBox="0 0 25 25">
      <rect x="7" y="1" width="17" height="17" fill="#FFFFFF"/>
      <rect x="7" y="1" width="1.5" height="17" fill="#A9B4C8"/>
      <rect x="7" y="1" width="17" height="5" fill="#3A7F86"/>
      <rect x="9" y="3" width="13" height="1.2" fill="#8FCAD0"/>
      <rect x="22" y="6" width="2" height="12" fill="#1E3A58"/>
      <rect x="7" y="16" width="17" height="2" fill="#1E3A58"/>
      <rect x="18.2" y="7.2" width="2.8" height="1.8" fill="#8E9BB5"/><rect x="18.2" y="10.3" width="2.8" height="1.8" fill="#8E9BB5"/><rect x="18.2" y="13.2" width="2.8" height="1.8" fill="#8E9BB5"/>
      <rect x="0" y="7" width="16" height="17" fill="#FFFFFF"/>
      <rect x="0" y="7" width="1.3" height="17" fill="#A9B4C8"/>
      <rect x="0" y="7" width="16" height="5" fill="#3A7F86"/>
      <rect x="1.5" y="9.2" width="12" height="1.2" fill="#8FCAD0"/>
      <rect x="14" y="12" width="2" height="12" fill="#1E3A58"/>
      <rect x="0" y="22" width="16" height="2" fill="#1E3A58"/>
      <rect x="3" y="13.2" width="2.8" height="1.8" fill="#8E9BB5"/><rect x="3" y="16.3" width="2.8" height="1.8" fill="#8E9BB5"/><rect x="3" y="19.3" width="2.8" height="1.8" fill="#8E9BB5"/>
      <rect x="10" y="13.2" width="2.8" height="1.8" fill="#8E9BB5"/><rect x="10" y="19.3" width="2.8" height="1.8" fill="#8E9BB5"/>
    </svg>
<div class="t" style="left:62.30px;top:418.10px;font-size:15px;color:#595959;transform:scaleX(1.0280);">qryLoginSessions</div>
<svg class="a" style="left:22px;top:448px" width="25" height="25" viewBox="0 0 25 25">
      <rect x="7" y="1" width="17" height="17" fill="#FFFFFF"/>
      <rect x="7" y="1" width="1.5" height="17" fill="#A9B4C8"/>
      <rect x="7" y="1" width="17" height="5" fill="#3A7F86"/>
      <rect x="9" y="3" width="13" height="1.2" fill="#8FCAD0"/>
      <rect x="22" y="6" width="2" height="12" fill="#1E3A58"/>
      <rect x="7" y="16" width="17" height="2" fill="#1E3A58"/>
      <rect x="18.2" y="7.2" width="2.8" height="1.8" fill="#8E9BB5"/><rect x="18.2" y="10.3" width="2.8" height="1.8" fill="#8E9BB5"/><rect x="18.2" y="13.2" width="2.8" height="1.8" fill="#8E9BB5"/>
      <rect x="0" y="7" width="16" height="17" fill="#FFFFFF"/>
      <rect x="0" y="7" width="1.3" height="17" fill="#A9B4C8"/>
      <rect x="0" y="7" width="16" height="5" fill="#3A7F86"/>
      <rect x="1.5" y="9.2" width="12" height="1.2" fill="#8FCAD0"/>
      <rect x="14" y="12" width="2" height="12" fill="#1E3A58"/>
      <rect x="0" y="22" width="16" height="2" fill="#1E3A58"/>
      <rect x="3" y="13.2" width="2.8" height="1.8" fill="#8E9BB5"/><rect x="3" y="16.3" width="2.8" height="1.8" fill="#8E9BB5"/><rect x="3" y="19.3" width="2.8" height="1.8" fill="#8E9BB5"/>
      <rect x="10" y="13.2" width="2.8" height="1.8" fill="#8E9BB5"/><rect x="10" y="19.3" width="2.8" height="1.8" fill="#8E9BB5"/>
    </svg>
<div class="t" style="left:62.30px;top:454.30px;font-size:15px;color:#595959;transform:scaleX(1.0352);">qryUsers</div>
<div class="t" style="left:17.43px;top:486.81px;font-size:17px;color:#4A4A4A;font-weight:700;transform:scaleX(1.0693);">Forms</div>
<svg class="a" style="left:177px;top:487px" width="12" height="13" viewBox="0 0 12 13"><path d="M1.5 6L6 1.5L10.5 6M1.5 12L6 7.5L10.5 12" fill="none" stroke="#404040" stroke-width="1.6"/></svg>
<svg class="a" style="left:22px;top:512px" width="22" height="21" viewBox="0 0 22 21">
      <defs><linearGradient id="fh" x1="0" y1="0" x2="1" y2="1"><stop offset="0" stop-color="#D06A90"/><stop offset="1" stop-color="#A02050"/></linearGradient></defs>
      <rect x="0" y="0" width="22" height="21" fill="#EEF3FC"/>
      <rect x="0" y="0" width="1" height="21" fill="#9AAAC4"/>
      <rect x="0" y="0" width="22" height="5" fill="url(#fh)"/>
      <rect x="1" y="2" width="20" height="1.2" fill="#E6A8C0"/>
      <rect x="20.8" y="5" width="1.2" height="16" fill="#2A4060"/>
      <rect x="0" y="19.5" width="22" height="1.5" fill="#2A4060"/>
      <rect x="3" y="6.1" width="5.8" height="1.9" rx="0.5" fill="#4A5F90"/>
      <rect x="3" y="12.1" width="5.8" height="1.9" rx="0.5" fill="#4A5F90"/>
      <rect x="10.2" y="6.1" width="7.6" height="4.6" rx="0.5" fill="#4A5F88"/><rect x="12" y="8" width="4" height="1" fill="#F0F4FA"/>
      <rect x="10.2" y="12.1" width="7.6" height="4.6" rx="0.5" fill="#4A5F88"/><rect x="12" y="14" width="4" height="1" fill="#F0F4FA"/>
    </svg>
<div class="t" style="left:62.50px;top:518.10px;font-size:15px;color:#595959;transform:scaleX(1.0416);">frmLoggedInUsers</div>
<svg class="a" style="left:22px;top:548px" width="22" height="21" viewBox="0 0 22 21">
      <defs><linearGradient id="fh" x1="0" y1="0" x2="1" y2="1"><stop offset="0" stop-color="#D06A90"/><stop offset="1" stop-color="#A02050"/></linearGradient></defs>
      <rect x="0" y="0" width="22" height="21" fill="#EEF3FC"/>
      <rect x="0" y="0" width="1" height="21" fill="#9AAAC4"/>
      <rect x="0" y="0" width="22" height="5" fill="url(#fh)"/>
      <rect x="1" y="2" width="20" height="1.2" fill="#E6A8C0"/>
      <rect x="20.8" y="5" width="1.2" height="16" fill="#2A4060"/>
      <rect x="0" y="19.5" width="22" height="1.5" fill="#2A4060"/>
      <rect x="3" y="6.1" width="5.8" height="1.9" rx="0.5" fill="#4A5F90"/>
      <rect x="3" y="12.1" width="5.8" height="1.9" rx="0.5" fill="#4A5F90"/>
      <rect x="10.2" y="6.1" width="7.6" height="4.6" rx="0.5" fill="#4A5F88"/><rect x="12" y="8" width="4" height="1" fill="#F0F4FA"/>
      <rect x="10.2" y="12.1" width="7.6" height="4.6" rx="0.5" fill="#4A5F88"/><rect x="12" y="14" width="4" height="1" fill="#F0F4FA"/>
    </svg>
<div class="t" style="left:62.50px;top:554.10px;font-size:15px;color:#595959;transform:scaleX(1.0859);">frmLogin</div>
<svg class="a" style="left:22px;top:584px" width="22" height="21" viewBox="0 0 22 21">
      <defs><linearGradient id="fh" x1="0" y1="0" x2="1" y2="1"><stop offset="0" stop-color="#D06A90"/><stop offset="1" stop-color="#A02050"/></linearGradient></defs>
      <rect x="0" y="0" width="22" height="21" fill="#EEF3FC"/>
      <rect x="0" y="0" width="1" height="21" fill="#9AAAC4"/>
      <rect x="0" y="0" width="22" height="5" fill="url(#fh)"/>
      <rect x="1" y="2" width="20" height="1.2" fill="#E6A8C0"/>
      <rect x="20.8" y="5" width="1.2" height="16" fill="#2A4060"/>
      <rect x="0" y="19.5" width="22" height="1.5" fill="#2A4060"/>
      <rect x="3" y="6.1" width="5.8" height="1.9" rx="0.5" fill="#4A5F90"/>
      <rect x="3" y="12.1" width="5.8" height="1.9" rx="0.5" fill="#4A5F90"/>
      <rect x="10.2" y="6.1" width="7.6" height="4.6" rx="0.5" fill="#4A5F88"/><rect x="12" y="8" width="4" height="1" fill="#F0F4FA"/>
      <rect x="10.2" y="12.1" width="7.6" height="4.6" rx="0.5" fill="#4A5F88"/><rect x="12" y="14" width="4" height="1" fill="#F0F4FA"/>
    </svg>
<div class="t" style="left:62.50px;top:590.10px;font-size:15px;color:#595959;transform:scaleX(1.0559);">frmNewUser</div>
<svg class="a" style="left:22px;top:620px" width="22" height="21" viewBox="0 0 22 21">
      <defs><linearGradient id="fh" x1="0" y1="0" x2="1" y2="1"><stop offset="0" stop-color="#D06A90"/><stop offset="1" stop-color="#A02050"/></linearGradient></defs>
      <rect x="0" y="0" width="22" height="21" fill="#EEF3FC"/>
      <rect x="0" y="0" width="1" height="21" fill="#9AAAC4"/>
      <rect x="0" y="0" width="22" height="5" fill="url(#fh)"/>
      <rect x="1" y="2" width="20" height="1.2" fill="#E6A8C0"/>
      <rect x="20.8" y="5" width="1.2" height="16" fill="#2A4060"/>
      <rect x="0" y="19.5" width="22" height="1.5" fill="#2A4060"/>
      <rect x="3" y="6.1" width="5.8" height="1.9" rx="0.5" fill="#4A5F90"/>
      <rect x="3" y="12.1" width="5.8" height="1.9" rx="0.5" fill="#4A5F90"/>
      <rect x="10.2" y="6.1" width="7.6" height="4.6" rx="0.5" fill="#4A5F88"/><rect x="12" y="8" width="4" height="1" fill="#F0F4FA"/>
      <rect x="10.2" y="12.1" width="7.6" height="4.6" rx="0.5" fill="#4A5F88"/><rect x="12" y="14" width="4" height="1" fill="#F0F4FA"/>
    </svg>
<div class="t" style="left:62.50px;top:626.10px;font-size:15px;color:#595959;transform:scaleX(1.0241);">frmSessions</div>
<div class="t" style="left:17.38px;top:657.56px;font-size:17px;color:#4A4A4A;font-weight:700;transform:scaleX(1.1187);">Modules</div>
<svg class="a" style="left:177px;top:657.75px" width="12" height="13" viewBox="0 0 12 13"><path d="M1.5 6L6 1.5L10.5 6M1.5 12L6 7.5L10.5 12" fill="none" stroke="#404040" stroke-width="1.6"/></svg>
<svg class="a" style="left:14px;top:680px" width="32" height="28" viewBox="0 0 32 28"><g shape-rendering="crispEdges"><rect x="14" y="3" width="1" height="2" fill="#E8B040"/><rect x="12" y="5" width="2" height="4" fill="#D8A838"/><rect x="14" y="5" width="4" height="3" fill="#EEE6B0"/><rect x="14" y="8" width="4" height="3" fill="#E8D050"/><rect x="18" y="8" width="2" height="4" fill="#A87820"/><rect x="14" y="11" width="4" height="1" fill="#806020"/><rect x="15" y="4" width="2" height="1" fill="#D0B870"/><rect x="23" y="6" width="1" height="2" fill="#E86030"/><rect x="21" y="8" width="6" height="6" fill="#E85530"/><rect x="23" y="9" width="2" height="2" fill="#FFD0C0"/><rect x="22" y="13" width="4" height="2" fill="#B03010"/><rect x="21" y="9" width="1" height="3" fill="#E88020"/><rect x="6" y="15" width="2" height="2" fill="#E86030"/><rect x="5" y="17" width="6" height="5" fill="#E85530"/><rect x="6" y="17" width="3" height="2" fill="#FFC8B8"/><rect x="6" y="21" width="4" height="2" fill="#A82818"/><rect x="8" y="23" width="1" height="1" fill="#902010"/><rect x="5" y="18" width="1" height="3" fill="#E08020"/><rect x="11" y="17" width="7" height="4" fill="#3A9A3A"/><rect x="12" y="18" width="3" height="2" fill="#A8E098"/><rect x="14" y="21" width="4" height="2" fill="#006000"/><rect x="18" y="20" width="2" height="1" fill="#108010"/><rect x="11" y="19" width="1" height="2" fill="#107010"/><rect x="20" y="20" width="7" height="4" fill="#4A80E0"/><rect x="21" y="21" width="3" height="2" fill="#A8CCFF"/><rect x="23" y="24" width="4" height="2" fill="#1040A0"/><rect x="27" y="23" width="2" height="1" fill="#1040A0"/><rect x="21" y="23" width="2" height="1" fill="#2050B0"/><rect x="12" y="12" width="2" height="2" fill="#2A3038"/><rect x="11" y="14" width="1" height="1" fill="#2A3038"/><rect x="9" y="15" width="2" height="2" fill="#2A3038"/><rect x="17" y="12" width="1" height="2" fill="#2A3038"/><rect x="15" y="14" width="2" height="1" fill="#2A3038"/><rect x="19" y="14" width="2" height="1" fill="#2A3038"/><rect x="22" y="14" width="1" height="1" fill="#2A3038"/><rect x="14" y="15" width="1" height="2" fill="#2A3038"/><rect x="20" y="15" width="1" height="2" fill="#2A3038"/><rect x="18" y="17" width="2" height="1" fill="#2A3038"/><rect x="21" y="17" width="2" height="1" fill="#2A3038"/><rect x="23" y="18" width="1" height="2" fill="#2A3038"/></g></svg>
<div class="t" style="left:61.42px;top:689.10px;font-size:15px;color:#595959;transform:scaleX(1.0798);">modAuditLog</div>
<svg class="a" style="left:14px;top:716px" width="32" height="28" viewBox="0 0 32 28"><g shape-rendering="crispEdges"><rect x="14" y="3" width="1" height="2" fill="#E8B040"/><rect x="12" y="5" width="2" height="4" fill="#D8A838"/><rect x="14" y="5" width="4" height="3" fill="#EEE6B0"/><rect x="14" y="8" width="4" height="3" fill="#E8D050"/><rect x="18" y="8" width="2" height="4" fill="#A87820"/><rect x="14" y="11" width="4" height="1" fill="#806020"/><rect x="15" y="4" width="2" height="1" fill="#D0B870"/><rect x="23" y="6" width="1" height="2" fill="#E86030"/><rect x="21" y="8" width="6" height="6" fill="#E85530"/><rect x="23" y="9" width="2" height="2" fill="#FFD0C0"/><rect x="22" y="13" width="4" height="2" fill="#B03010"/><rect x="21" y="9" width="1" height="3" fill="#E88020"/><rect x="6" y="15" width="2" height="2" fill="#E86030"/><rect x="5" y="17" width="6" height="5" fill="#E85530"/><rect x="6" y="17" width="3" height="2" fill="#FFC8B8"/><rect x="6" y="21" width="4" height="2" fill="#A82818"/><rect x="8" y="23" width="1" height="1" fill="#902010"/><rect x="5" y="18" width="1" height="3" fill="#E08020"/><rect x="11" y="17" width="7" height="4" fill="#3A9A3A"/><rect x="12" y="18" width="3" height="2" fill="#A8E098"/><rect x="14" y="21" width="4" height="2" fill="#006000"/><rect x="18" y="20" width="2" height="1" fill="#108010"/><rect x="11" y="19" width="1" height="2" fill="#107010"/><rect x="20" y="20" width="7" height="4" fill="#4A80E0"/><rect x="21" y="21" width="3" height="2" fill="#A8CCFF"/><rect x="23" y="24" width="4" height="2" fill="#1040A0"/><rect x="27" y="23" width="2" height="1" fill="#1040A0"/><rect x="21" y="23" width="2" height="1" fill="#2050B0"/><rect x="12" y="12" width="2" height="2" fill="#2A3038"/><rect x="11" y="14" width="1" height="1" fill="#2A3038"/><rect x="9" y="15" width="2" height="2" fill="#2A3038"/><rect x="17" y="12" width="1" height="2" fill="#2A3038"/><rect x="15" y="14" width="2" height="1" fill="#2A3038"/><rect x="19" y="14" width="2" height="1" fill="#2A3038"/><rect x="22" y="14" width="1" height="1" fill="#2A3038"/><rect x="14" y="15" width="1" height="2" fill="#2A3038"/><rect x="20" y="15" width="1" height="2" fill="#2A3038"/><rect x="18" y="17" width="2" height="1" fill="#2A3038"/><rect x="21" y="17" width="2" height="1" fill="#2A3038"/><rect x="23" y="18" width="1" height="2" fill="#2A3038"/></g></svg>
<div class="t" style="left:61.44px;top:725.10px;font-size:15px;color:#595959;transform:scaleX(1.0638);">modEncryption</div>
<svg class="a" style="left:14px;top:752px" width="32" height="28" viewBox="0 0 32 28"><g shape-rendering="crispEdges"><rect x="14" y="3" width="1" height="2" fill="#E8B040"/><rect x="12" y="5" width="2" height="4" fill="#D8A838"/><rect x="14" y="5" width="4" height="3" fill="#EEE6B0"/><rect x="14" y="8" width="4" height="3" fill="#E8D050"/><rect x="18" y="8" width="2" height="4" fill="#A87820"/><rect x="14" y="11" width="4" height="1" fill="#806020"/><rect x="15" y="4" width="2" height="1" fill="#D0B870"/><rect x="23" y="6" width="1" height="2" fill="#E86030"/><rect x="21" y="8" width="6" height="6" fill="#E85530"/><rect x="23" y="9" width="2" height="2" fill="#FFD0C0"/><rect x="22" y="13" width="4" height="2" fill="#B03010"/><rect x="21" y="9" width="1" height="3" fill="#E88020"/><rect x="6" y="15" width="2" height="2" fill="#E86030"/><rect x="5" y="17" width="6" height="5" fill="#E85530"/><rect x="6" y="17" width="3" height="2" fill="#FFC8B8"/><rect x="6" y="21" width="4" height="2" fill="#A82818"/><rect x="8" y="23" width="1" height="1" fill="#902010"/><rect x="5" y="18" width="1" height="3" fill="#E08020"/><rect x="11" y="17" width="7" height="4" fill="#3A9A3A"/><rect x="12" y="18" width="3" height="2" fill="#A8E098"/><rect x="14" y="21" width="4" height="2" fill="#006000"/><rect x="18" y="20" width="2" height="1" fill="#108010"/><rect x="11" y="19" width="1" height="2" fill="#107010"/><rect x="20" y="20" width="7" height="4" fill="#4A80E0"/><rect x="21" y="21" width="3" height="2" fill="#A8CCFF"/><rect x="23" y="24" width="4" height="2" fill="#1040A0"/><rect x="27" y="23" width="2" height="1" fill="#1040A0"/><rect x="21" y="23" width="2" height="1" fill="#2050B0"/><rect x="12" y="12" width="2" height="2" fill="#2A3038"/><rect x="11" y="14" width="1" height="1" fill="#2A3038"/><rect x="9" y="15" width="2" height="2" fill="#2A3038"/><rect x="17" y="12" width="1" height="2" fill="#2A3038"/><rect x="15" y="14" width="2" height="1" fill="#2A3038"/><rect x="19" y="14" width="2" height="1" fill="#2A3038"/><rect x="22" y="14" width="1" height="1" fill="#2A3038"/><rect x="14" y="15" width="1" height="2" fill="#2A3038"/><rect x="20" y="15" width="1" height="2" fill="#2A3038"/><rect x="18" y="17" width="2" height="1" fill="#2A3038"/><rect x="21" y="17" width="2" height="1" fill="#2A3038"/><rect x="23" y="18" width="1" height="2" fill="#2A3038"/></g></svg>
<div class="t" style="left:61.44px;top:761.10px;font-size:15px;color:#595959;transform:scaleX(1.0570);">modFunctions</div>
<div class="a" style="left:216px;top:234px;width:1704px;height:767px;background:#E4E4E4;"></div>
<div class="a" style="left:216px;top:234px;width:1704px;height:1px;background:#A0A0A0;"></div>
<div class="a" style="left:216px;top:235px;width:1704px;height:1px;background:#6A6A6A;"></div>
<div class="a" style="left:216px;top:235px;width:1px;height:766px;background:#6A6A6A;"></div>
<div class="a" style="left:1919px;top:236px;width:1px;height:765px;background:#F3F3F3;"></div>
<div class="a" style="left:217px;top:275px;width:1684px;height:1px;background:#F0F4F4;"></div>
<div class="a" style="left:1900px;top:275px;width:1px;height:726px;background:#F0F4F4;"></div>
<div class="a" style="left:217px;top:276px;width:1683px;height:723px;background:#FFFFFF;border:2px solid #A22A2F"></div>
<div class="a" style="left:217px;top:999px;width:1684px;height:2px;background:#FFFFFF;"></div>
<svg class="a" style="left:237px;top:289px" width="24" height="20" viewBox="0 0 24 20"><rect x="0" y="0" width="24" height="20" fill="#94A5C2"/>
      <rect x="0" y="0" width="24" height="4.8" fill="#4D6BA8"/>
      <rect x="1" y="2" width="6" height="1.2" fill="#AFC0E0"/><rect x="9" y="2" width="6" height="1.2" fill="#AFC0E0"/><rect x="16.5" y="2" width="5.5" height="1.2" fill="#AFC0E0"/>
      <rect x="0.8" y="5.3" width="6.7" height="2.9" fill="#FFFFFF"/><rect x="8.9" y="5.3" width="6.1" height="2.9" fill="#F2F6FD"/><rect x="16.2" y="5.3" width="5.8" height="2.9" fill="#E0EAFA"/>
      <rect x="0.8" y="9.2" width="6.7" height="3.4" fill="#FFFFFF"/><rect x="8.9" y="9.2" width="6.1" height="3.4" fill="#F0F5FD"/><rect x="16.2" y="9.2" width="5.8" height="3.4" fill="#DCE7FA"/>
      <rect x="0.8" y="13.8" width="6.7" height="3.6" fill="#FFFFFF"/><rect x="8.9" y="13.8" width="6.1" height="3.6" fill="#EEF4FD"/><rect x="16.2" y="13.8" width="5.8" height="3.6" fill="#D2E1FA"/>
      <rect x="22" y="4.8" width="2" height="15.2" fill="#23395A"/><rect x="0" y="18" width="24" height="2" fill="#23395A"/>
      <rect x="0" y="4.8" width="0.8" height="13.2" fill="#B5C2D8"/></svg>
<div class="t" style="left:276.30px;top:292.16px;font-size:18px;color:#333333;transform:scaleX(0.9574);">tblUsers</div>
<div class="a" style="left:1712px;top:300px;width:16px;height:1.5px;background:#404040;"></div>
<svg class="a" style="left:1781px;top:292px" width="18" height="17" viewBox="0 0 18 17"><rect x="1.6" y="1.1" width="14.8" height="14.8" fill="none" stroke="#404040" stroke-width="1.3"/></svg>
<svg class="a" style="left:1851px;top:292px" width="18" height="17" viewBox="0 0 18 17"><path d="M1.5 1L16.5 16M16.5 1L1.5 16" stroke="#404040" stroke-width="1.3"/></svg>
<div class="a" style="left:222px;top:322px;width:1673px;height:1px;background:#B5474A;"></div>
<div class="a" style="left:1695px;top:323px;width:200px;height:29px;background:#F5F6FC;"></div>
<div class="a" style="left:1837px;top:323px;width:1px;height:645px;background:#EEF0F5;"></div>
<div class="a" style="left:222px;top:323px;width:1473px;height:29px;background:#DEE1E6;"></div>
<div class="a" style="left:249px;top:323px;width:142px;height:29px;background:linear-gradient(#FCD665,#FFE98C);"></div>
<div class="a" style="left:222px;top:555px;width:27px;height:413px;background:#F5F6FC;"></div>
<div class="a" style="left:1696px;top:380px;width:199px;height:1px;background:#EEF0F5;"></div>
<div class="a" style="left:1696px;top:409px;width:199px;height:1px;background:#EEF0F5;"></div>
<div class="a" style="left:1696px;top:438px;width:199px;height:1px;background:#EEF0F5;"></div>
<div class="a" style="left:1696px;top:467px;width:199px;height:1px;background:#EEF0F5;"></div>
<div class="a" style="left:1696px;top:496px;width:199px;height:1px;background:#EEF0F5;"></div>
<div class="a" style="left:1696px;top:525px;width:199px;height:1px;background:#EEF0F5;"></div>
<div class="a" style="left:1696px;top:554px;width:199px;height:1px;background:#EEF0F5;"></div>
<div class="a" style="left:222px;top:583px;width:1673px;height:1px;background:#EEF0F5;"></div>
<div class="a" style="left:222px;top:612px;width:1673px;height:1px;background:#EEF0F5;"></div>
<div class="a" style="left:222px;top:641px;width:1673px;height:1px;background:#EEF0F5;"></div>
<div class="a" style="left:222px;top:670px;width:1673px;height:1px;background:#EEF0F5;"></div>
<div class="a" style="left:222px;top:699px;width:1673px;height:1px;background:#EEF0F5;"></div>
<div class="a" style="left:222px;top:728px;width:1673px;height:1px;background:#EEF0F5;"></div>
<div class="a" style="left:222px;top:757px;width:1673px;height:1px;background:#EEF0F5;"></div>
<div class="a" style="left:222px;top:786px;width:1673px;height:1px;background:#EEF0F5;"></div>
<div class="a" style="left:222px;top:815px;width:1673px;height:1px;background:#EEF0F5;"></div>
<div class="a" style="left:222px;top:844px;width:1673px;height:1px;background:#EEF0F5;"></div>
<div class="a" style="left:222px;top:873px;width:1673px;height:1px;background:#EEF0F5;"></div>
<div class="a" style="left:222px;top:902px;width:1673px;height:1px;background:#EEF0F5;"></div>
<div class="a" style="left:222px;top:931px;width:1673px;height:1px;background:#EEF0F5;"></div>
<div class="a" style="left:222px;top:960px;width:1673px;height:1px;background:#EEF0F5;"></div>
<div class="a" style="left:249px;top:555px;width:1px;height:413px;background:#EEF0F5;"></div>
<div class="a" style="left:391px;top:555px;width:1px;height:413px;background:#EEF0F5;"></div>
<div class="a" style="left:533px;top:555px;width:1px;height:413px;background:#EEF0F5;"></div>
<div class="a" style="left:675px;top:555px;width:1px;height:413px;background:#EEF0F5;"></div>
<div class="a" style="left:817px;top:555px;width:1px;height:413px;background:#EEF0F5;"></div>
<div class="a" style="left:959px;top:555px;width:1px;height:413px;background:#EEF0F5;"></div>
<div class="a" style="left:1129px;top:555px;width:1px;height:413px;background:#EEF0F5;"></div>
<div class="a" style="left:1271px;top:555px;width:1px;height:413px;background:#EEF0F5;"></div>
<div class="a" style="left:1413px;top:555px;width:1px;height:413px;background:#EEF0F5;"></div>
<div class="a" style="left:1555px;top:555px;width:1px;height:413px;background:#EEF0F5;"></div>
<div class="a" style="left:1695px;top:555px;width:1px;height:413px;background:#EEF0F5;"></div>
<div class="a" style="left:249px;top:352px;width:1446px;height:28px;background:#A6CEEE;"></div>
<div class="a" style="left:222px;top:352px;width:27px;height:28px;background:#DFE3E8;"></div>
<div class="a" style="left:222px;top:380px;width:27px;height:1px;background:#A9ADB3;"></div>
<div class="a" style="left:249px;top:380px;width:1446px;height:1px;background:#D0D7E5;"></div>
<div class="a" style="left:249px;top:381px;width:1446px;height:28px;background:#F2F2F2;"></div>
<div class="a" style="left:222px;top:381px;width:27px;height:28px;background:#DFE3E8;"></div>
<div class="a" style="left:222px;top:409px;width:27px;height:1px;background:#A9ADB3;"></div>
<div class="a" style="left:249px;top:409px;width:1446px;height:1px;background:#D0D7E5;"></div>
<div class="a" style="left:249px;top:410px;width:1446px;height:28px;background:#FFFFFF;"></div>
<div class="a" style="left:222px;top:410px;width:27px;height:28px;background:#DFE3E8;"></div>
<div class="a" style="left:222px;top:438px;width:27px;height:1px;background:#A9ADB3;"></div>
<div class="a" style="left:249px;top:438px;width:1446px;height:1px;background:#D0D7E5;"></div>
<div class="a" style="left:249px;top:439px;width:1446px;height:28px;background:#F2F2F2;"></div>
<div class="a" style="left:222px;top:439px;width:27px;height:28px;background:#DFE3E8;"></div>
<div class="a" style="left:222px;top:467px;width:27px;height:1px;background:#A9ADB3;"></div>
<div class="a" style="left:249px;top:467px;width:1446px;height:1px;background:#D0D7E5;"></div>
<div class="a" style="left:249px;top:468px;width:1446px;height:28px;background:#FFFFFF;"></div>
<div class="a" style="left:222px;top:468px;width:27px;height:28px;background:#DFE3E8;"></div>
<div class="a" style="left:222px;top:496px;width:27px;height:1px;background:#A9ADB3;"></div>
<div class="a" style="left:249px;top:496px;width:1446px;height:1px;background:#D0D7E5;"></div>
<div class="a" style="left:249px;top:497px;width:1446px;height:28px;background:#F2F2F2;"></div>
<div class="a" style="left:222px;top:497px;width:27px;height:28px;background:#DFE3E8;"></div>
<div class="a" style="left:222px;top:525px;width:27px;height:1px;background:#A9ADB3;"></div>
<div class="a" style="left:249px;top:525px;width:1446px;height:1px;background:#D0D7E5;"></div>
<div class="a" style="left:249px;top:526px;width:1446px;height:28px;background:#FFFFFF;"></div>
<div class="a" style="left:222px;top:526px;width:27px;height:28px;background:#DFE3E8;"></div>
<div class="a" style="left:222px;top:554px;width:27px;height:1px;background:#A9ADB3;"></div>
<div class="a" style="left:249px;top:554px;width:1446px;height:1px;background:#D0D7E5;"></div>
<div class="a" style="left:222px;top:352px;width:27px;height:29px;background:#FDD869;"></div>
<div class="a" style="left:249px;top:352px;width:1px;height:203px;background:#D0D7E5;"></div>
<div class="a" style="left:249px;top:323px;width:1px;height:29px;background:#DDE4EE;"></div>
<div class="a" style="left:391px;top:352px;width:1px;height:203px;background:#D0D7E5;"></div>
<div class="a" style="left:391px;top:323px;width:1px;height:29px;background:#ABABAB;"></div>
<div class="a" style="left:533px;top:352px;width:1px;height:203px;background:#D0D7E5;"></div>
<div class="a" style="left:533px;top:323px;width:1px;height:29px;background:#ABABAB;"></div>
<div class="a" style="left:675px;top:352px;width:1px;height:203px;background:#D0D7E5;"></div>
<div class="a" style="left:675px;top:323px;width:1px;height:29px;background:#ABABAB;"></div>
<div class="a" style="left:817px;top:352px;width:1px;height:203px;background:#D0D7E5;"></div>
<div class="a" style="left:817px;top:323px;width:1px;height:29px;background:#ABABAB;"></div>
<div class="a" style="left:959px;top:352px;width:1px;height:203px;background:#D0D7E5;"></div>
<div class="a" style="left:959px;top:323px;width:1px;height:29px;background:#ABABAB;"></div>
<div class="a" style="left:1129px;top:352px;width:1px;height:203px;background:#D0D7E5;"></div>
<div class="a" style="left:1129px;top:323px;width:1px;height:29px;background:#ABABAB;"></div>
<div class="a" style="left:1271px;top:352px;width:1px;height:203px;background:#D0D7E5;"></div>
<div class="a" style="left:1271px;top:323px;width:1px;height:29px;background:#ABABAB;"></div>
<div class="a" style="left:1413px;top:352px;width:1px;height:203px;background:#D0D7E5;"></div>
<div class="a" style="left:1413px;top:323px;width:1px;height:29px;background:#ABABAB;"></div>
<div class="a" style="left:1555px;top:352px;width:1px;height:203px;background:#D0D7E5;"></div>
<div class="a" style="left:1555px;top:323px;width:1px;height:29px;background:#ABABAB;"></div>
<div class="a" style="left:1695px;top:352px;width:1px;height:203px;background:#D0D7E5;"></div>
<div class="a" style="left:1695px;top:323px;width:1px;height:29px;background:#ABABAB;"></div>
<div class="a" style="left:248px;top:352px;width:1px;height:203px;background:#A9ADB3;"></div>
<svg class="a" style="left:234px;top:336px" width="13" height="13" viewBox="0 0 13 13"><path d="M12 0.8V11.8H1Z" fill="#ECEDF0"/><path d="M12 0.8L1 11.8" fill="none" stroke="#8FB0E8" stroke-width="0.9" stroke-dasharray="1 0.6"/><path d="M1.5 11.5H12" stroke="#D5D9E0" stroke-width="0.8"/></svg>
<svg class="a" style="left:228px;top:533px" width="15" height="15" viewBox="0 0 15 15"><rect x="0" y="0" width="15" height="15" fill="#D9DEE0"/><path d="M7.5 1.5V13.5M1.5 7.5H13.5M3.3 3.3L11.7 11.7M11.7 3.3L3.3 11.7" stroke="#333" stroke-width="1.1"/></svg>
<div class="a" style="left:249px;top:351px;width:143px;height:30px;background:#FFFFFF;border:1.5px solid #F4A6AE"></div>
<div class="a" style="left:253.5px;top:353px;width:36.5px;height:27px;background:#000000;"></div>
<div class="t" style="left:260.70px;top:327.97px;font-size:20px;color:#333333;">UserName</div>
<div class="t" style="left:424.20px;top:327.97px;font-size:20px;color:#333333;transform:scaleX(0.9864);">Active</div>
<div class="t" style="left:552.33px;top:327.97px;font-size:20px;color:#333333;transform:scaleX(0.9742);">LoggedIn</div>
<div class="t" style="left:688.16px;top:327.97px;font-size:20px;color:#333333;transform:scaleX(1.0419);">Computer</div>
<div class="t" style="left:854.85px;top:327.97px;font-size:20px;color:#333333;transform:scaleX(0.9532);">PWD</div>
<div class="t" style="left:976.23px;top:327.97px;font-size:20px;color:#333333;transform:scaleX(0.9716);">ChangePWD</div>
<div class="t" style="left:1138.41px;top:327.97px;font-size:20px;color:#333333;transform:scaleX(0.9876);">ExpireDays</div>
<div class="t" style="left:1278.30px;top:327.97px;font-size:20px;color:#333333;transform:scaleX(0.9389);">AccessLevel</div>
<div class="t" style="left:1428.72px;top:327.97px;font-size:20px;color:#333333;transform:scaleX(0.9808);">PWDDate</div>
<div class="t" style="left:1559.04px;top:327.97px;font-size:20px;color:#333333;font-style:italic;transform:scaleX(0.9645);">Click to Add</div>
<svg class="a" style="left:373px;top:334px" width="14" height="9" viewBox="0 0 14 9"><path d="M0.5 1.2H13" stroke="#fff" stroke-width="1.2"/><path d="M2.8 2.2H10.7L6.75 7.3Z" fill="#2A2A2A"/></svg>
<svg class="a" style="left:515px;top:334px" width="14" height="9" viewBox="0 0 14 9"><path d="M0.5 1.2H13" stroke="#fff" stroke-width="1.2"/><path d="M2.8 2.2H10.7L6.75 7.3Z" fill="#2A2A2A"/></svg>
<svg class="a" style="left:657px;top:334px" width="14" height="9" viewBox="0 0 14 9"><path d="M0.5 1.2H13" stroke="#fff" stroke-width="1.2"/><path d="M2.8 2.2H10.7L6.75 7.3Z" fill="#2A2A2A"/></svg>
<svg class="a" style="left:799px;top:334px" width="14" height="9" viewBox="0 0 14 9"><path d="M0.5 1.2H13" stroke="#fff" stroke-width="1.2"/><path d="M2.8 2.2H10.7L6.75 7.3Z" fill="#2A2A2A"/></svg>
<svg class="a" style="left:941px;top:334px" width="14" height="9" viewBox="0 0 14 9"><path d="M0.5 1.2H13" stroke="#fff" stroke-width="1.2"/><path d="M2.8 2.2H10.7L6.75 7.3Z" fill="#2A2A2A"/></svg>
<svg class="a" style="left:1111px;top:334px" width="14" height="9" viewBox="0 0 14 9"><path d="M0.5 1.2H13" stroke="#fff" stroke-width="1.2"/><path d="M2.8 2.2H10.7L6.75 7.3Z" fill="#2A2A2A"/></svg>
<svg class="a" style="left:1253px;top:334px" width="14" height="9" viewBox="0 0 14 9"><path d="M0.5 1.2H13" stroke="#fff" stroke-width="1.2"/><path d="M2.8 2.2H10.7L6.75 7.3Z" fill="#2A2A2A"/></svg>
<svg class="a" style="left:1395px;top:334px" width="14" height="9" viewBox="0 0 14 9"><path d="M0.5 1.2H13" stroke="#fff" stroke-width="1.2"/><path d="M2.8 2.2H10.7L6.75 7.3Z" fill="#2A2A2A"/></svg>
<svg class="a" style="left:1537px;top:334px" width="14" height="9" viewBox="0 0 14 9"><path d="M0.5 1.2H13" stroke="#fff" stroke-width="1.2"/><path d="M2.8 2.2H10.7L6.75 7.3Z" fill="#2A2A2A"/></svg>
<svg class="a" style="left:1676px;top:334px" width="14" height="9" viewBox="0 0 14 9"><path d="M0.5 1.2H13" stroke="#fff" stroke-width="1.2"/><path d="M2.8 2.2H10.7L6.75 7.3Z" fill="#2A2A2A"/></svg>
<div class="t" style="left:253.01px;top:357.17px;font-size:20px;color:#FFFFFF;transform:scaleX(0.9924);">Billy</div>
<div class="t" style="left:678.50px;top:357.17px;font-size:20px;color:#262626;transform:scaleX(0.9009);">COLIN-PC</div>
<div class="t" style="left:820.10px;top:357.17px;font-size:20px;color:#262626;">á<span class="tofu"></span>ÅDŒAjÖ<span class="tofu"></span>»“</div>
<svg class="a" style="left:451px;top:353px" width="26" height="26" viewBox="0 0 26 26"><rect x="0.6" y="0.6" width="24.8" height="24.8" fill="#fff" stroke="#222" stroke-width="1.2"/></svg>
<svg class="a" style="left:592px;top:353px" width="26" height="26" viewBox="0 0 26 26"><rect x="0.6" y="0.6" width="24.8" height="24.8" fill="#fff" stroke="#222" stroke-width="1.2"/><path d="M6.3 13.2L10.4 17.3L19.6 8.3" fill="none" stroke="#2A2A2A" stroke-width="1.9" stroke-linecap="square"/></svg>
<svg class="a" style="left:1031px;top:353px" width="26" height="26" viewBox="0 0 26 26"><rect x="0.6" y="0.6" width="24.8" height="24.8" fill="#fff" stroke="#222" stroke-width="1.2"/></svg>
<div class="t" style="left:1254.70px;top:357.17px;font-size:20px;color:#262626;transform:scaleX(0.8818);">0</div>
<div class="t" style="left:1400.98px;top:357.17px;font-size:20px;color:#262626;transform:scaleX(0.9200);">1</div>
<div class="t" style="left:252.57px;top:386.17px;font-size:20px;color:#262626;transform:scaleX(1.0302);">Delilah</div>
<div class="t" style="left:678.50px;top:386.17px;font-size:20px;color:#262626;transform:scaleX(0.9009);">COLIN-PC</div>
<div class="t" style="left:820.19px;top:386.17px;font-size:20px;color:#262626;transform:scaleX(0.9143);">ç<span class="tofu"></span>Ë</div>
<div class="t" style="left:1448.30px;top:386.17px;font-size:20px;color:#262626;transform:scaleX(1.0503);">31/03/2010</div>
<svg class="a" style="left:451px;top:382px" width="26" height="26" viewBox="0 0 26 26"><rect x="0.6" y="0.6" width="24.8" height="24.8" fill="#fff" stroke="#222" stroke-width="1.2"/><path d="M6.3 13.2L10.4 17.3L19.6 8.3" fill="none" stroke="#2A2A2A" stroke-width="1.9" stroke-linecap="square"/></svg>
<svg class="a" style="left:592px;top:382px" width="26" height="26" viewBox="0 0 26 26"><rect x="0.6" y="0.6" width="24.8" height="24.8" fill="#fff" stroke="#222" stroke-width="1.2"/><path d="M6.3 13.2L10.4 17.3L19.6 8.3" fill="none" stroke="#2A2A2A" stroke-width="1.9" stroke-linecap="square"/></svg>
<svg class="a" style="left:1031px;top:382px" width="26" height="26" viewBox="0 0 26 26"><rect x="0.6" y="0.6" width="24.8" height="24.8" fill="#fff" stroke="#222" stroke-width="1.2"/></svg>
<div class="t" style="left:1254.70px;top:386.17px;font-size:20px;color:#262626;transform:scaleX(0.8818);">0</div>
<div class="t" style="left:1400.98px;top:386.17px;font-size:20px;color:#262626;transform:scaleX(0.9200);">1</div>
<div class="t" style="left:253.60px;top:415.17px;font-size:20px;color:#262626;transform:scaleX(0.8499);">Jack</div>
<div class="t" style="left:678.50px;top:415.17px;font-size:20px;color:#262626;transform:scaleX(0.9009);">COLIN-PC</div>
<div class="t" style="left:820.09px;top:415.17px;font-size:20px;color:#262626;transform:scaleX(1.0125);">ï<span class="tofu"></span>Ñu—dqÔ<span class="tofu"></span></div>
<svg class="a" style="left:451px;top:411px" width="26" height="26" viewBox="0 0 26 26"><rect x="0.6" y="0.6" width="24.8" height="24.8" fill="#fff" stroke="#222" stroke-width="1.2"/><path d="M6.3 13.2L10.4 17.3L19.6 8.3" fill="none" stroke="#2A2A2A" stroke-width="1.9" stroke-linecap="square"/></svg>
<svg class="a" style="left:592px;top:411px" width="26" height="26" viewBox="0 0 26 26"><rect x="0.6" y="0.6" width="24.8" height="24.8" fill="#fff" stroke="#222" stroke-width="1.2"/><path d="M6.3 13.2L10.4 17.3L19.6 8.3" fill="none" stroke="#2A2A2A" stroke-width="1.9" stroke-linecap="square"/></svg>
<svg class="a" style="left:1031px;top:411px" width="26" height="26" viewBox="0 0 26 26"><rect x="0.6" y="0.6" width="24.8" height="24.8" fill="#fff" stroke="#222" stroke-width="1.2"/></svg>
<div class="t" style="left:1254.70px;top:415.17px;font-size:20px;color:#262626;transform:scaleX(0.8818);">0</div>
<div class="t" style="left:1400.98px;top:415.17px;font-size:20px;color:#262626;transform:scaleX(0.9200);">1</div>
<div class="t" style="left:253.60px;top:444.17px;font-size:20px;color:#262626;transform:scaleX(0.9001);">Jill</div>
<div class="t" style="left:820.12px;top:444.17px;font-size:20px;color:#262626;transform:scaleX(0.9753);">í<span class="tofu"></span>Ó0—Kl</div>
<svg class="a" style="left:451px;top:440px" width="26" height="26" viewBox="0 0 26 26"><rect x="0.6" y="0.6" width="24.8" height="24.8" fill="#fff" stroke="#222" stroke-width="1.2"/><path d="M6.3 13.2L10.4 17.3L19.6 8.3" fill="none" stroke="#2A2A2A" stroke-width="1.9" stroke-linecap="square"/></svg>
<svg class="a" style="left:592px;top:440px" width="26" height="26" viewBox="0 0 26 26"><rect x="0.6" y="0.6" width="24.8" height="24.8" fill="#fff" stroke="#222" stroke-width="1.2"/></svg>
<svg class="a" style="left:1031px;top:440px" width="26" height="26" viewBox="0 0 26 26"><rect x="0.6" y="0.6" width="24.8" height="24.8" fill="#fff" stroke="#222" stroke-width="1.2"/></svg>
<div class="t" style="left:1254.70px;top:444.17px;font-size:20px;color:#262626;transform:scaleX(0.8818);">0</div>
<div class="t" style="left:1400.98px;top:444.17px;font-size:20px;color:#262626;transform:scaleX(0.9200);">1</div>
<div class="t" style="left:253.60px;top:473.17px;font-size:20px;color:#262626;transform:scaleX(0.9689);">Samson</div>
<div class="t" style="left:820.15px;top:473.17px;font-size:20px;color:#262626;transform:scaleX(0.9496);">Ð<span class="tofu"></span>Êc‹@</div>
<div class="t" style="left:1447.22px;top:473.17px;font-size:20px;color:#262626;transform:scaleX(1.0770);">12/11/2018</div>
<svg class="a" style="left:451px;top:469px" width="26" height="26" viewBox="0 0 26 26"><rect x="0.6" y="0.6" width="24.8" height="24.8" fill="#fff" stroke="#222" stroke-width="1.2"/><path d="M6.3 13.2L10.4 17.3L19.6 8.3" fill="none" stroke="#2A2A2A" stroke-width="1.9" stroke-linecap="square"/></svg>
<svg class="a" style="left:592px;top:469px" width="26" height="26" viewBox="0 0 26 26"><rect x="0.6" y="0.6" width="24.8" height="24.8" fill="#fff" stroke="#222" stroke-width="1.2"/></svg>
<svg class="a" style="left:1031px;top:469px" width="26" height="26" viewBox="0 0 26 26"><rect x="0.6" y="0.6" width="24.8" height="24.8" fill="#fff" stroke="#222" stroke-width="1.2"/><path d="M6.3 13.2L10.4 17.3L19.6 8.3" fill="none" stroke="#2A2A2A" stroke-width="1.9" stroke-linecap="square"/></svg>
<div class="t" style="left:1254.70px;top:473.17px;font-size:20px;color:#262626;transform:scaleX(0.8818);">0</div>
<div class="t" style="left:1400.98px;top:473.17px;font-size:20px;color:#262626;transform:scaleX(0.9200);">2</div>
<div class="t" style="left:253.60px;top:502.17px;font-size:20px;color:#262626;transform:scaleX(1.0521);">Tommy</div>
<div class="t" style="left:678.50px;top:502.17px;font-size:20px;color:#262626;transform:scaleX(0.9009);">COLIN-PC</div>
<div class="t" style="left:820.15px;top:502.17px;font-size:20px;color:#262626;transform:scaleX(0.9475);">ï<span class="tofu"></span>ÂZ‹@}Ë</div>
<div class="t" style="left:1448.30px;top:502.17px;font-size:20px;color:#262626;transform:scaleX(1.0503);">05/10/2018</div>
<svg class="a" style="left:451px;top:498px" width="26" height="26" viewBox="0 0 26 26"><rect x="0.6" y="0.6" width="24.8" height="24.8" fill="#fff" stroke="#222" stroke-width="1.2"/><path d="M6.3 13.2L10.4 17.3L19.6 8.3" fill="none" stroke="#2A2A2A" stroke-width="1.9" stroke-linecap="square"/></svg>
<svg class="a" style="left:592px;top:498px" width="26" height="26" viewBox="0 0 26 26"><rect x="0.6" y="0.6" width="24.8" height="24.8" fill="#fff" stroke="#222" stroke-width="1.2"/><path d="M6.3 13.2L10.4 17.3L19.6 8.3" fill="none" stroke="#2A2A2A" stroke-width="1.9" stroke-linecap="square"/></svg>
<svg class="a" style="left:1031px;top:498px" width="26" height="26" viewBox="0 0 26 26"><rect x="0.6" y="0.6" width="24.8" height="24.8" fill="#fff" stroke="#222" stroke-width="1.2"/><path d="M6.3 13.2L10.4 17.3L19.6 8.3" fill="none" stroke="#2A2A2A" stroke-width="1.9" stroke-linecap="square"/></svg>
<div class="t" style="left:1243.60px;top:502.17px;font-size:20px;color:#262626;transform:scaleX(0.9402);">30</div>
<div class="t" style="left:1400.98px;top:502.17px;font-size:20px;color:#262626;transform:scaleX(0.9200);">1</div>
<svg class="a" style="left:451px;top:527px" width="26" height="26" viewBox="0 0 26 26"><rect x="0.6" y="0.6" width="24.8" height="24.8" fill="#fff" stroke="#222" stroke-width="1.2"/><path d="M6.3 13.2L10.4 17.3L19.6 8.3" fill="none" stroke="#2A2A2A" stroke-width="1.9" stroke-linecap="square"/></svg>
<svg class="a" style="left:592px;top:527px" width="26" height="26" viewBox="0 0 26 26"><rect x="0.6" y="0.6" width="24.8" height="24.8" fill="#fff" stroke="#222" stroke-width="1.2"/><rect x="7.5" y="7.5" width="11" height="11" fill="#333"/></svg>
<svg class="a" style="left:1031px;top:527px" width="26" height="26" viewBox="0 0 26 26"><rect x="0.6" y="0.6" width="24.8" height="24.8" fill="#fff" stroke="#222" stroke-width="1.2"/></svg>
<div class="t" style="left:1254.70px;top:531.17px;font-size:20px;color:#262626;transform:scaleX(0.8818);">0</div>
<div class="t" style="left:1400.98px;top:531.17px;font-size:20px;color:#262626;transform:scaleX(0.9200);">1</div>
<div class="a" style="left:222px;top:968px;width:1673px;height:1px;background:#A9AEB6;"></div>
<div class="a" style="left:222px;top:969px;width:1673px;height:12px;background:#F3F4F6;"></div>
<div class="a" style="left:222px;top:981px;width:1673px;height:13px;background:#E6E8EB;"></div>
<div class="a" style="left:222px;top:968px;width:1px;height:26px;background:#A9AEB6;"></div>
<div class="a" style="left:1894px;top:968px;width:1px;height:26px;background:#C5C9CF;"></div>
<div class="t" style="left:228.05px;top:975.05px;font-size:16px;color:#555C66;transform:scaleX(0.9463);">Record:</div>
<svg class="a" style="left:288px;top:976px" width="12" height="11" viewBox="0 0 12 11"><rect x="0.5" y="0" width="1.5" height="11" fill="#404040"/><path d="M11 0V11L4 5.5Z" fill="#404040"/></svg>
<svg class="a" style="left:313px;top:976px" width="8" height="11" viewBox="0 0 8 11"><path d="M7 0V11L0 5.5Z" fill="#B4B8BE"/></svg>
<div class="a" style="left:331px;top:970px;width:75px;height:24px;background:#FFFFFF;border:1px solid #A6A6A6"></div>
<div class="t" style="left:333.43px;top:974.90px;font-size:16px;color:#000000;transform:scaleX(0.9736);">1 of 6</div>
<svg class="a" style="left:416px;top:976px" width="8" height="11" viewBox="0 0 8 11"><path d="M0.5 0V11L7 5.5Z" fill="#404040"/></svg>
<svg class="a" style="left:441px;top:976px" width="12" height="11" viewBox="0 0 12 11"><path d="M0.5 0V11L7.5 5.5Z" fill="#404040"/><rect x="10" y="0" width="1.5" height="11" fill="#404040"/></svg>
<svg class="a" style="left:462px;top:975px" width="21" height="13" viewBox="0 0 21 13"><path d="M0.5 1V12L7 6.5Z" fill="#404040"/>
      <path d="M14 1V12M8.5 6.5H19.5M10 2.5L18 10.5M18 2.5L10 10.5" stroke="#EAB765" stroke-width="1.5"/>
      <circle cx="14" cy="6.5" r="2.8" fill="#F0F1F3"/><circle cx="14" cy="6.5" r="2.6" fill="none" stroke="#EAB765" stroke-width="1"/></svg>
<div class="a" style="left:489px;top:969px;width:1px;height:25px;background:#A9AEB6;"></div>
<svg class="a" style="left:503px;top:971px" width="25" height="23" viewBox="0 0 25 23"><path d="M1 1H18V3.2L12 9V16.5H8V9L1 3.2Z" fill="#ABABAB"/>
      <path d="M3.5 2L9.5 8V15" fill="none" stroke="#fff" stroke-width="0.8"/>
      <path d="M13 14L22.5 22.5M22.5 14L13 22.5" stroke="#ABABAB" stroke-width="1.6"/></svg>
<div class="t" style="left:530.92px;top:975.90px;font-size:16px;color:#A6A6A6;transform:scaleX(0.9763);">No Filter</div>
<div class="a" style="left:606px;top:969px;width:1px;height:25px;background:#A9AEB6;"></div>
<div class="a" style="left:613px;top:970px;width:105px;height:24px;background:#FFFFFF;border:1px solid #A6A6A6"></div>
<div class="t" style="left:615.60px;top:974.90px;font-size:16px;color:#000000;transform:scaleX(0.9167);">Search</div>
<div class="a" style="left:0px;top:1001px;width:1920px;height:1px;background:#D5D5D5;"></div>
<div class="a" style="left:0px;top:1002px;width:1920px;height:32px;background:#F3F3F3;"></div>
<div class="t" style="left:10.23px;top:1011.00px;font-size:15px;color:#444444;transform:scaleX(1.0221);">Datasheet View</div>
<div class="a" style="left:1805px;top:1002px;width:57px;height:32px;background:#C8C8C8;"></div>
<svg class="a" style="left:1823px;top:1007px" width="21" height="19" viewBox="0 0 21 19"><rect x="0.5" y="0.5" width="19" height="18" fill="none" stroke="#6A6A6A" stroke-width="1"/>
      <path d="M0.5 4.5H19.5M5.5 4.5V18.5M8 9H11M13 9H16M8 13H11M13 13H16" stroke="#6A6A6A" stroke-width="1"/></svg>
<svg class="a" style="left:1879px;top:1006px" width="23" height="20" viewBox="0 0 23 20"><path d="M1.5 1.5V14.5H13Z" fill="none" stroke="#6A6A6A" stroke-width="1"/>
      <path d="M4 14L15.5 2.5L18 5L6.5 16.5Z" fill="none" stroke="#6A6A6A" stroke-width="1"/>
      <path d="M16.5 1.5L18 0L21 3L19.5 4.5Z" fill="#6A6A6A"/>
      <rect x="1.5" y="13.5" width="20" height="5" fill="#F3F3F3" stroke="#6A6A6A" stroke-width="1"/>
      <path d="M4.5 14v2M7.5 14v2M10.5 14v2M13.5 14v2M16.5 14v2M19.5 14v2" stroke="#6A6A6A" stroke-width="0.8"/></svg>
<div class="a" style="left:0px;top:1034px;width:1920px;height:46px;background:#000000;"></div>
<svg class="a" style="left:15px;top:1044px" width="25" height="26" viewBox="0 0 25 26"><path d="M0 3.6L10.3 2.2V12.3H0ZM11.5 2L24.5 0.2V12.3H11.5ZM0 13.5H10.3V23.7L0 22.3ZM11.5 13.5H24.5V25.8L11.5 24Z" fill="#fff"/></svg>
<svg class="a" style="left:68px;top:1044px" width="26" height="26" viewBox="0 0 26 26"><circle cx="16" cy="9.5" r="8" fill="none" stroke="#fff" stroke-width="1.4"/><path d="M10.3 15.2L1 24.5" stroke="#fff" stroke-width="1.5"/></svg>
<svg class="a" style="left:119px;top:1046px" width="32" height="22" viewBox="0 0 32 22"><rect x="7" y="0.8" width="18" height="20" fill="none" stroke="#fff" stroke-width="1.4"/><path d="M4 4H1V17.5H4M28 4H31V17.5H28" fill="none" stroke="#fff" stroke-width="1.3"/></svg>
<svg class="a" style="left:182px;top:1044px" width="23" height="26" viewBox="0 0 23 26"><path d="M0.5 6.5H22.3V25.5L12 23.5H0.5Z" fill="#fff"/>
      <path d="M7 7V4Q7 1 10 1H12Q15 1 15 4V7M10 7V4Q10 2.5 12 2.5Q14 2.5 14 4" fill="none" stroke="#fff" stroke-width="1.2"/>
      <rect x="4" y="10.5" width="6" height="5.3" fill="#000"/><rect x="11.3" y="10.5" width="6" height="5.3" fill="#000"/>
      <rect x="4" y="17" width="6" height="5.3" fill="#000"/><rect x="11.3" y="17" width="6" height="5.3" fill="#000"/></svg>
<svg class="a" style="left:238px;top:1046px" width="26" height="20" viewBox="0 0 26 20"><path d="M0.5 7.5L13 0.5L25.5 7.5V19.5H0.5Z" fill="#fff"/><path d="M0.5 7.5L13 14.5L25.5 7.5" fill="none" stroke="#000" stroke-width="1.2"/><path d="M12 13L20 18.5L17 12" fill="#000"/></svg>
<svg class="a" style="left:296px;top:1047px" width="24" height="21" viewBox="0 0 24 21"><path d="M0.5 1.5H8.5L10.5 3.5H23.5V20.5H0.5Z" fill="#F7D46A"/>
      <path d="M0.5 5H23.5V20.5H0.5Z" fill="#FBE28F"/>
      <rect x="1.5" y="2" width="6" height="1.5" fill="#E8B43A"/>
      <path d="M5 20.5V12.5H19V20.5H15.5V15.5H8.5V20.5Z" fill="#3AA0DE"/></svg>
<div class="a" style="left:287px;top:1077px;width:43px;height:3px;background:#76B9ED;"></div>
<svg class="a" style="left:352px;top:1044px" width="26" height="26" viewBox="0 0 26 26"><defs>
      <linearGradient id="eg1" x1="0" y1="0" x2="1" y2="1"><stop offset="0" stop-color="#2FB8E8"/><stop offset="0.6" stop-color="#1B8BD6"/><stop offset="1" stop-color="#114A9E"/></linearGradient>
      <linearGradient id="eg2" x1="0" y1="0" x2="1" y2="0"><stop offset="0" stop-color="#35C1F1"/><stop offset="1" stop-color="#66D17A"/></linearGradient></defs>
      <circle cx="13" cy="13" r="12.5" fill="url(#eg1)"/>
      <path d="M3 9Q7 1 15 1.2Q24 2 25.5 11Q25.5 15.5 21 16.5Q16.5 17 15.5 13Q15 9 10 9Q5.5 9.5 3 12Z" fill="url(#eg2)"/>
      <path d="M10 9Q5.5 10 6.5 16Q8 22 15 22.5Q11 20 11.5 15Q12 11.5 15.5 12.5" fill="#0F3F87" opacity="0.8"/></svg>
<svg class="a" style="left:410px;top:1045px" width="24" height="24" viewBox="0 0 24 24"><circle cx="12" cy="12" r="11.5" fill="#DB4437"/>
      <path d="M12 12L1.5 6.5A11.5 11.5 0 0 0 8.5 23Z" fill="#0F9D58"/>
      <path d="M12 12L8.5 23A11.5 11.5 0 0 0 23.5 11.5H12Z" fill="#F4C20D"/>
      <circle cx="12" cy="12" r="5.4" fill="#fff"/><circle cx="12" cy="12" r="4.2" fill="#4285F4"/></svg>
<div class="a" style="left:401px;top:1077px;width:43px;height:3px;background:#76B9ED;"></div>
<svg class="a" style="left:467px;top:1045px" width="24" height="24" viewBox="0 0 24 24"><rect x="0" y="0" width="24" height="24" fill="#0F78D7"/>
      <path d="M12 3.5Q15.5 5.5 19.5 5.5V12Q19.5 17.5 12 21Q4.5 17.5 4.5 12V5.5Q8.5 5.5 12 3.5Z" fill="#fff"/>
      <path d="M12 3.5V21M4.5 11.5H19.5" stroke="#0F78D7" stroke-width="1.5"/></svg>
<div class="a" style="left:458px;top:1077px;width:43px;height:3px;background:#76B9ED;"></div>
<div class="a" style="left:509px;top:1034px;width:48px;height:46px;background:#333333;"></div>
<div class="a" style="left:557px;top:1034px;width:7px;height:46px;background:#262626;"></div>
<svg class="a" style="left:524px;top:1045px" width="25" height="24" viewBox="0 0 25 24"><path d="M6 3.5Q6 0.5 15.5 0.5Q24.5 0.5 24.5 3.5V20.5Q24.5 23.5 15.5 23.5Q6 23.5 6 20.5Z" fill="#A4262C"/>
      <ellipse cx="15.3" cy="3.5" rx="9.2" ry="3" fill="#D9657A"/>
      <path d="M6 9Q6 12 15.5 12Q24.5 12 24.5 9V12Q24.5 15 15.5 15Q6 15 6 12Z" fill="#C8374A"/>
      <rect x="0" y="5.5" width="13.5" height="13.5" fill="#C0283A"/>
      <text x="6.7" y="16.5" font-family="Liberation Sans" font-weight="bold" font-size="11" fill="#fff" text-anchor="middle">A</text></svg>
<div class="a" style="left:509px;top:1077px;width:55px;height:3px;background:#76B9ED;"></div>
<svg class="a" style="left:581px;top:1045px" width="24" height="24" viewBox="0 0 24 24"><circle cx="12" cy="12" r="11" fill="#fff" stroke="#10A64A" stroke-width="2"/>
      <circle cx="11" cy="10.8" r="4.6" fill="none" stroke="#10A64A" stroke-width="1.8"/><path d="M14.4 14.2L17.5 17.3" stroke="#10A64A" stroke-width="2"/></svg>
<div class="a" style="left:572px;top:1077px;width:43px;height:3px;background:#76B9ED;"></div>
<svg class="a" style="left:638px;top:1045px" width="25" height="23" viewBox="0 0 25 23"><rect x="7" y="0.5" width="17.5" height="22" fill="#21A366"/>
      <rect x="7" y="0.5" width="17.5" height="6" fill="#33C481"/>
      <rect x="7" y="15.5" width="17.5" height="7" fill="#185C37"/>
      <rect x="7" y="8.5" width="17.5" height="6" fill="#107C41"/>
      <rect x="0" y="5" width="13" height="13" fill="#107C41"/>
      <text x="6.5" y="15.5" font-family="Liberation Sans" font-weight="bold" font-size="10.5" fill="#fff" text-anchor="middle">X</text></svg>
<div class="a" style="left:629px;top:1077px;width:43px;height:3px;background:#76B9ED;"></div>
<svg class="a" style="left:1658px;top:1050px" width="20" height="12" viewBox="0 0 20 12"><path d="M1 11L10 2L19 11" fill="none" stroke="#fff" stroke-width="1.3"/></svg>
<svg class="a" style="left:1691px;top:1047px" width="26" height="18" viewBox="0 0 26 18"><path d="M4 1V5.5M7.5 1V5.5M2.5 5.5H9V8.5Q9 11 5.75 11Q2.5 11 2.5 8.5Z" fill="none" stroke="#fff" stroke-width="1.2"/>
      <path d="M5.75 11V16" stroke="#fff" stroke-width="1.2"/>
      <rect x="6.5" y="5.5" width="17" height="11" fill="none" stroke="#fff" stroke-width="1.2"/>
      <rect x="9" y="8" width="10.5" height="6" fill="#fff"/><rect x="23.8" y="8.5" width="1.7" height="5" fill="#fff"/></svg>
<div class="t" style="left:1731.56px;top:1050.06px;font-size:17px;color:#FFFFFF;transform:scaleX(0.9389);">ENG</div>
<div class="t" style="left:1791.25px;top:1050.06px;font-size:17px;color:#FFFFFF;transform:scaleX(0.9959);">9:55</div>
<svg class="a" style="left:1858px;top:1045px" width="25" height="25" viewBox="0 0 25 25"><path d="M0.5 0.5H24.5V18.5H16L12.5 23.5L9 18.5H0.5Z" fill="#fff"/><path d="M6 5.5H19M6 9.5H19M6 13.5H15" stroke="#000" stroke-width="1.2"/></svg>
<div class="a" style="left:1913px;top:1045px;width:1px;height:35px;background:#6E6E6E;"></div>
</body></html>
